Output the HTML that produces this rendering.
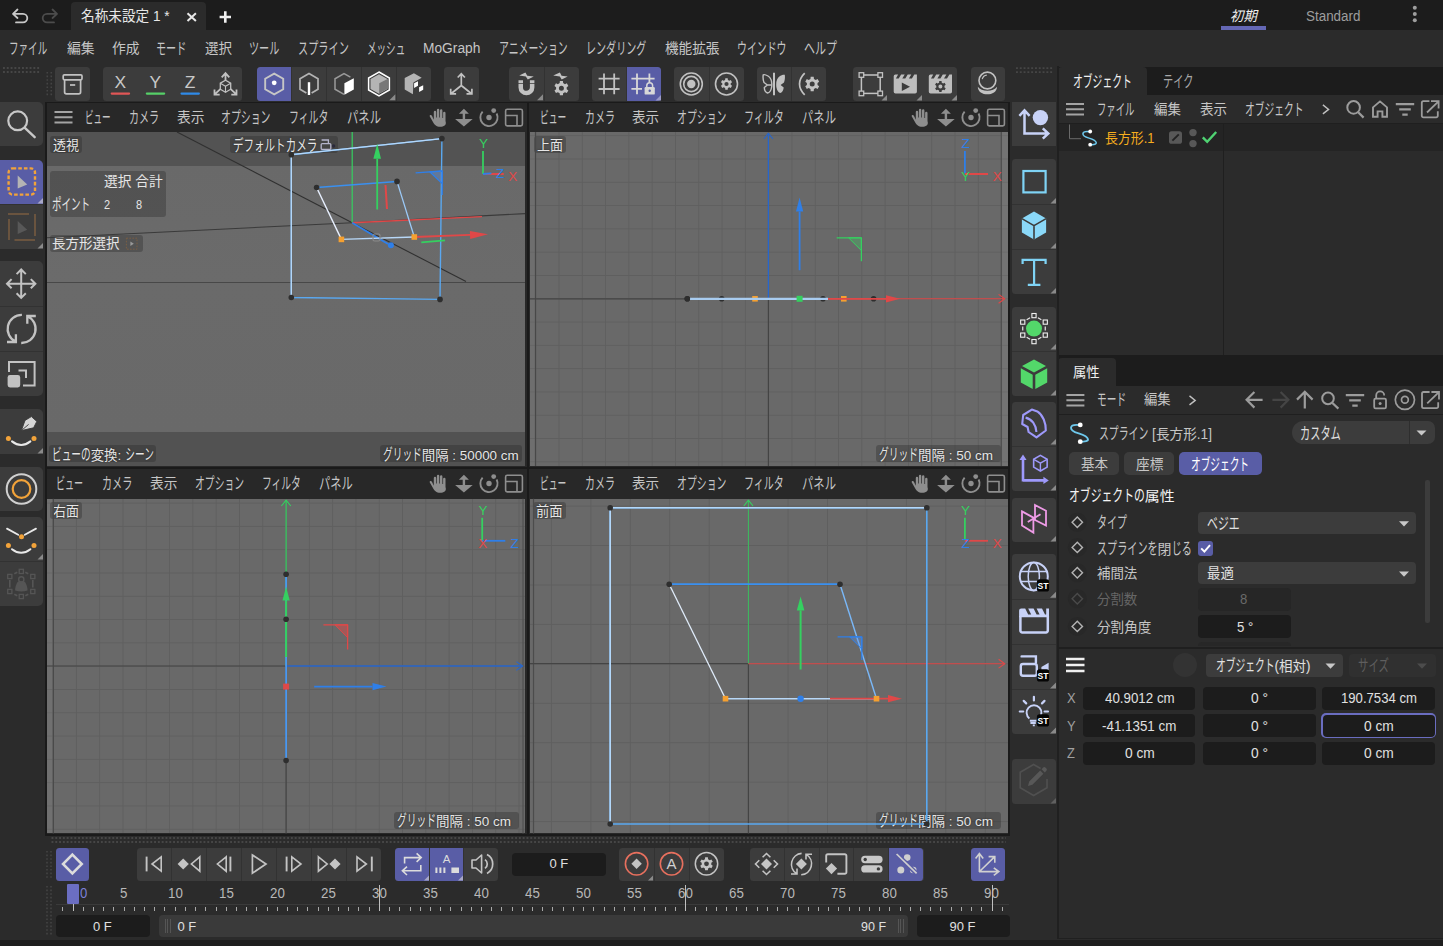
<!DOCTYPE html>
<html lang="ja"><head><meta charset="utf-8"><title>Cinema 4D</title>
<style>
html,body{margin:0;padding:0;}
body{width:1443px;height:946px;background:#2b2b2b;overflow:hidden;position:relative;font-family:"Liberation Sans","Noto Sans CJK JP",sans-serif;}
body div{position:absolute;}
.t{position:absolute;white-space:nowrap;height:20px;line-height:20px;transform-origin:0 50%;}
.k{display:inline-block;font-size:1.15em;line-height:20px;transform:scaleX(.63);transform-origin:0 50%;}
svg{position:absolute;left:0;top:0;}
</style></head><body>
<div style="left:0px;top:0px;width:1443px;height:30px;background:#1c1c1c;"></div>
<div style="left:71px;top:2px;width:135px;height:28px;background:#2b2b2b;border-radius:4px;border-radius:4px 4px 0 0;"></div>
<div style="left:0px;top:940px;width:1443px;height:6px;background:#1e1e1e;"></div>
<span class="t" id="t0" style="left:81px;top:6px;color:#e8e8e8;font-size:14.5px;transform:scaleX(0.9404);">名称未設定 1 *</span>
<span class="t" id="t1" style="left:1230.4px;top:6px;color:#f0f0f0;font-size:14px;font-style:italic;transform:scaleX(0.9571);">初期</span>
<div style="left:1220.5px;top:26px;width:45.5px;height:4px;background:#6467b4;"></div>
<span class="t" id="t2" style="left:1306.4px;top:6px;color:#9e9e9e;font-size:14px;transform:scaleX(0.9579);">Standard</span>
<span class="t" id="t3" style="left:9px;top:38px;color:#c6c6c6;font-size:14px;transform:scaleX(0.9415);"><span class="k" style="margin-right:-23.83px">ファイル</span></span>
<span class="t" id="t4" style="left:66.7px;top:38px;color:#c6c6c6;font-size:14px;transform:scaleX(0.9893);">編集</span>
<span class="t" id="t5" style="left:112px;top:38px;color:#c6c6c6;font-size:14px;transform:scaleX(0.9821);">作成</span>
<span class="t" id="t6" style="left:156.4px;top:38px;color:#c6c6c6;font-size:14px;transform:scaleX(0.9967);"><span class="k" style="margin-right:-17.87px">モード</span></span>
<span class="t" id="t7" style="left:204.7px;top:38px;color:#c6c6c6;font-size:14px;transform:scaleX(0.9643);">選択</span>
<span class="t" id="t8" style="left:249.4px;top:38px;color:#c6c6c6;font-size:14px;transform:scaleX(0.9967);"><span class="k" style="margin-right:-17.87px">ツール</span></span>
<span class="t" id="t9" style="left:297.7px;top:38px;color:#c6c6c6;font-size:14px;transform:scaleX(1.0020);"><span class="k" style="margin-right:-29.79px">スプライン</span></span>
<span class="t" id="t10" style="left:366.8px;top:38px;color:#c6c6c6;font-size:14px;transform:scaleX(0.9415);"><span class="k" style="margin-right:-23.83px">メッシュ</span></span>
<span class="t" id="t11" style="left:423.4px;top:38px;color:#c6c6c6;font-size:14px;transform:scaleX(0.9828);">MoGraph</span>
<span class="t" id="t12" style="left:498.7px;top:38px;color:#c6c6c6;font-size:14px;transform:scaleX(0.9729);"><span class="k" style="margin-right:-41.70px">アニメーション</span></span>
<span class="t" id="t13" style="left:586px;top:38px;color:#c6c6c6;font-size:14px;transform:scaleX(0.9918);"><span class="k" style="margin-right:-35.74px">レンダリング</span></span>
<span class="t" id="t14" style="left:664.5px;top:38px;color:#c6c6c6;font-size:14px;transform:scaleX(0.9732);">機能拡張</span>
<span class="t" id="t15" style="left:736.6px;top:38px;color:#c6c6c6;font-size:14px;transform:scaleX(0.9745);"><span class="k" style="margin-right:-29.79px">ウインドウ</span></span>
<span class="t" id="t16" style="left:804.3px;top:38px;color:#c6c6c6;font-size:14px;transform:scaleX(1.0833);"><span class="k" style="margin-right:-17.87px">ヘルプ</span></span>
<div style="left:55px;top:67px;width:35px;height:34px;background:#3c3c3c;border-radius:3.5px;"></div>
<div style="left:103px;top:67px;width:139px;height:34px;background:#3c3c3c;border-radius:3.5px;"></div>
<div style="left:257px;top:67px;width:174px;height:34px;background:#3c3c3c;border-radius:3.5px;"></div>
<div style="left:257.0px;top:67px;width:34.8px;height:34px;background:#595da6;border-radius:3.5px 0 0 3.5px;"></div>
<div style="left:291.3px;top:67px;width:1.0px;height:34px;background:#323232;"></div>
<div style="left:326.1px;top:67px;width:1.0px;height:34px;background:#323232;"></div>
<div style="left:360.9px;top:67px;width:1.0px;height:34px;background:#323232;"></div>
<div style="left:395.7px;top:67px;width:1.0px;height:34px;background:#323232;"></div>
<div style="left:444px;top:67px;width:35px;height:34px;background:#3c3c3c;border-radius:3.5px;"></div>
<div style="left:509px;top:67px;width:70px;height:34px;background:#3c3c3c;border-radius:3.5px;"></div>
<div style="left:543.5px;top:67px;width:1.0px;height:34px;background:#323232;"></div>
<div style="left:592px;top:67px;width:69px;height:34px;background:#3c3c3c;border-radius:3.5px;"></div>
<div style="left:626.5px;top:67px;width:34.5px;height:34px;background:#595da6;border-radius:0 3.5px 3.5px 0;"></div>
<div style="left:626.0px;top:67px;width:1.0px;height:34px;background:#323232;"></div>
<div style="left:674px;top:67px;width:70px;height:34px;background:#3c3c3c;border-radius:3.5px;"></div>
<div style="left:708.5px;top:67px;width:1.0px;height:34px;background:#323232;"></div>
<div style="left:757px;top:67px;width:69px;height:34px;background:#3c3c3c;border-radius:3.5px;"></div>
<div style="left:791.0px;top:67px;width:1.0px;height:34px;background:#323232;"></div>
<div style="left:853px;top:67px;width:104px;height:34px;background:#3c3c3c;border-radius:3.5px;"></div>
<div style="left:970.5px;top:67px;width:34.5px;height:34px;background:#3c3c3c;border-radius:3.5px;"></div>
<div style="left:0px;top:102px;width:43px;height:44px;background:#3c3c3c;border-radius:0 5px 5px 0;"></div>
<div style="left:0px;top:159.5px;width:43px;height:89.5px;background:#3c3c3c;border-radius:0 5px 5px 0;"></div>
<div style="left:0px;top:159.5px;width:43px;height:44.75px;background:#595da6;border-radius:0 5px 0 0;"></div>
<div style="left:0px;top:203.75px;width:43px;height:1.0px;background:#323232;"></div>
<div style="left:0px;top:261px;width:43px;height:135px;background:#3c3c3c;border-radius:0 5px 5px 0;"></div>
<div style="left:0px;top:305.5px;width:43px;height:1.0px;background:#323232;"></div>
<div style="left:0px;top:350.5px;width:43px;height:1.0px;background:#323232;"></div>
<div style="left:0px;top:409px;width:43px;height:45px;background:#3c3c3c;border-radius:0 5px 5px 0;"></div>
<div style="left:0px;top:467px;width:43px;height:44px;background:#3c3c3c;border-radius:0 5px 5px 0;"></div>
<div style="left:0px;top:517px;width:43px;height:89px;background:#3c3c3c;border-radius:0 5px 5px 0;"></div>
<div style="left:0px;top:561.0px;width:43px;height:1.0px;background:#323232;"></div>
<div style="left:1012px;top:102px;width:44px;height:44px;background:#3c3c3c;"></div>
<div style="left:1012px;top:159px;width:44px;height:135px;background:#3c3c3c;border-radius:3.5px;"></div>
<div style="left:1012px;top:203.5px;width:44px;height:1.0px;background:#323232;"></div>
<div style="left:1012px;top:248.5px;width:44px;height:1.0px;background:#323232;"></div>
<div style="left:1012px;top:307px;width:44px;height:89px;background:#3c3c3c;border-radius:3.5px;"></div>
<div style="left:1012px;top:351.0px;width:44px;height:1.0px;background:#323232;"></div>
<div style="left:1012px;top:402px;width:44px;height:89px;background:#3c3c3c;border-radius:3.5px;"></div>
<div style="left:1012px;top:446.0px;width:44px;height:1.0px;background:#323232;"></div>
<div style="left:1012px;top:497.5px;width:44px;height:44.5px;background:#3c3c3c;border-radius:3.5px;"></div>
<div style="left:1012px;top:554px;width:44px;height:180px;background:#3c3c3c;border-radius:3.5px;"></div>
<div style="left:1012px;top:598.5px;width:44px;height:1.0px;background:#323232;"></div>
<div style="left:1012px;top:643.5px;width:44px;height:1.0px;background:#323232;"></div>
<div style="left:1012px;top:688.5px;width:44px;height:1.0px;background:#323232;"></div>
<div style="left:1012px;top:759px;width:44px;height:45px;background:#3c3c3c;border-radius:3.5px;"></div>
<div style="left:45.4px;top:101.8px;width:964.3px;height:733.8px;background:#1a1a1a;"></div>
<div style="left:46.6px;top:103.4px;width:961.8px;height:730.8px;background:#282828;"></div>
<div style="left:527px;top:102px;width:1.6px;height:733px;background:#1a1a1a;"></div>
<div style="left:46px;top:467.4px;width:963px;height:1.6px;background:#1a1a1a;"></div>
<span class="t" id="t17" style="left:84.7px;top:107px;color:#c6c6c6;font-size:14px;transform:scaleX(0.8433);"><span class="k" style="margin-right:-17.87px">ビュー</span></span>
<span class="t" id="t18" style="left:129px;top:107px;color:#c6c6c6;font-size:14px;transform:scaleX(0.9867);"><span class="k" style="margin-right:-17.87px">カメラ</span></span>
<span class="t" id="t19" style="left:176.6px;top:107px;color:#c6c6c6;font-size:14px;transform:scaleX(0.9786);">表示</span>
<span class="t" id="t20" style="left:221.3px;top:107px;color:#c6c6c6;font-size:14px;transform:scaleX(0.9745);"><span class="k" style="margin-right:-29.79px">オプション</span></span>
<span class="t" id="t21" style="left:289px;top:107px;color:#c6c6c6;font-size:14px;transform:scaleX(0.9750);"><span class="k" style="margin-right:-23.83px">フィルタ</span></span>
<span class="t" id="t22" style="left:346.7px;top:107px;color:#c6c6c6;font-size:14px;transform:scaleX(1.1167);"><span class="k" style="margin-right:-17.87px">パネル</span></span>
<span class="t" id="t23" style="left:539.5px;top:107px;color:#c6c6c6;font-size:14px;transform:scaleX(0.8633);"><span class="k" style="margin-right:-17.87px">ビュー</span></span>
<span class="t" id="t24" style="left:584.5px;top:107px;color:#c6c6c6;font-size:14px;transform:scaleX(0.9833);"><span class="k" style="margin-right:-17.87px">カメラ</span></span>
<span class="t" id="t25" style="left:632px;top:107px;color:#c6c6c6;font-size:14px;transform:scaleX(0.9643);">表示</span>
<span class="t" id="t26" style="left:677px;top:107px;color:#c6c6c6;font-size:14px;transform:scaleX(0.9765);"><span class="k" style="margin-right:-29.79px">オプション</span></span>
<span class="t" id="t27" style="left:744px;top:107px;color:#c6c6c6;font-size:14px;transform:scaleX(0.9850);"><span class="k" style="margin-right:-23.83px">フィルタ</span></span>
<span class="t" id="t28" style="left:801.8px;top:107px;color:#c6c6c6;font-size:14px;transform:scaleX(1.1167);"><span class="k" style="margin-right:-17.87px">パネル</span></span>
<span class="t" id="t29" style="left:56.2px;top:473px;color:#c6c6c6;font-size:14px;transform:scaleX(0.8933);"><span class="k" style="margin-right:-17.87px">ビュー</span></span>
<span class="t" id="t30" style="left:101.6px;top:473px;color:#c6c6c6;font-size:14px;transform:scaleX(0.9933);"><span class="k" style="margin-right:-17.87px">カメラ</span></span>
<span class="t" id="t31" style="left:149.5px;top:473px;color:#c6c6c6;font-size:14px;transform:scaleX(0.9750);">表示</span>
<span class="t" id="t32" style="left:194.5px;top:473px;color:#c6c6c6;font-size:14px;transform:scaleX(0.9686);"><span class="k" style="margin-right:-29.79px">オプション</span></span>
<span class="t" id="t33" style="left:262px;top:473px;color:#c6c6c6;font-size:14px;transform:scaleX(0.9625);"><span class="k" style="margin-right:-23.83px">フィルタ</span></span>
<span class="t" id="t34" style="left:319.4px;top:473px;color:#c6c6c6;font-size:14px;transform:scaleX(1.1133);"><span class="k" style="margin-right:-17.87px">パネル</span></span>
<span class="t" id="t35" style="left:539.5px;top:473px;color:#c6c6c6;font-size:14px;transform:scaleX(0.8633);"><span class="k" style="margin-right:-17.87px">ビュー</span></span>
<span class="t" id="t36" style="left:584.5px;top:473px;color:#c6c6c6;font-size:14px;transform:scaleX(0.9833);"><span class="k" style="margin-right:-17.87px">カメラ</span></span>
<span class="t" id="t37" style="left:632px;top:473px;color:#c6c6c6;font-size:14px;transform:scaleX(0.9643);">表示</span>
<span class="t" id="t38" style="left:677px;top:473px;color:#c6c6c6;font-size:14px;transform:scaleX(0.9765);"><span class="k" style="margin-right:-29.79px">オプション</span></span>
<span class="t" id="t39" style="left:744px;top:473px;color:#c6c6c6;font-size:14px;transform:scaleX(0.9850);"><span class="k" style="margin-right:-23.83px">フィルタ</span></span>
<span class="t" id="t40" style="left:801.8px;top:473px;color:#c6c6c6;font-size:14px;transform:scaleX(1.1167);"><span class="k" style="margin-right:-17.87px">パネル</span></span>
<div style="left:47px;top:132px;width:478.3px;height:334px;background:#6c6c6c;background:linear-gradient(to bottom,#535353 0,#535353 33.7px,#696969 33.7px,#6b6b6b 149.8px,#484848 149.8px,#484848 151.3px,#6a6a6a 151.3px,#696969 300px,#525252 300px,#525252 334px);"></div>
<div style="left:529.7px;top:132px;width:478.3px;height:334px;background:#696969;background-image:linear-gradient(to right,#5f5f5f 1px,transparent 1px),linear-gradient(to bottom,#5f5f5f 1px,transparent 1px);background-size:23.3px 23.3px;background-position:5.20px 3.20px;"></div>
<div style="left:529.7px;top:132px;width:5.3px;height:334px;background:rgba(255,255,255,0.04);"></div>
<div style="left:1002px;top:132px;width:6px;height:334px;background:rgba(255,255,255,0.07);"></div>
<div style="left:47px;top:498.8px;width:478.3px;height:334.7px;background:#696969;background-image:linear-gradient(to right,#5f5f5f 1px,transparent 1px),linear-gradient(to bottom,#5f5f5f 1px,transparent 1px);background-size:23.3px 23.3px;background-position:5.60px 3.60px;"></div>
<div style="left:47px;top:498.8px;width:6px;height:334.7px;background:rgba(255,255,255,0.05);"></div>
<div style="left:529.7px;top:498.8px;width:478.3px;height:334.7px;background:#696969;background-image:linear-gradient(to right,#5f5f5f 1px,transparent 1px),linear-gradient(to bottom,#5f5f5f 1px,transparent 1px);background-size:39.45px 39.45px;background-position:20.95px 6.60px;"></div>
<div style="left:1058px;top:66.5px;width:385px;height:28.5px;background:#1c1c1c;"></div>
<div style="left:1058px;top:66.5px;width:89px;height:28.5px;background:#2b2b2b;border-radius:4px 4px 0 0;"></div>
<div style="left:1058px;top:123px;width:385px;height:1px;background:#1f1f1f;"></div>
<div style="left:1058px;top:124px;width:385px;height:27px;background:#242424;"></div>
<div style="left:1223px;top:124px;width:1px;height:231px;background:#1f1f1f;"></div>
<div style="left:1058px;top:355px;width:385px;height:31px;background:#1c1c1c;"></div>
<div style="left:1058px;top:358px;width:58px;height:28px;background:#2b2b2b;border-radius:4px 4px 0 0;"></div>
<div style="left:1058px;top:414px;width:385px;height:1px;background:#1f1f1f;"></div>
<div style="left:1057px;top:66px;width:1.5px;height:872.5px;background:#202020;"></div>
<div style="left:1057px;top:937.7px;width:386px;height:1.0px;background:#202020;"></div>
<span class="t" id="t41" style="left:1073px;top:71px;color:#f0f0f0;font-size:14px;transform:scaleX(0.9672);"><span class="k" style="margin-right:-35.74px">オブジェクト</span></span>
<span class="t" id="t42" style="left:1162.7px;top:71px;color:#a8a8a8;font-size:14px;transform:scaleX(1.0033);"><span class="k" style="margin-right:-17.87px">テイク</span></span>
<span class="t" id="t43" style="left:1096.7px;top:98.7px;color:#c6c6c6;font-size:14px;transform:scaleX(0.9220);"><span class="k" style="margin-right:-23.83px">ファイル</span></span>
<span class="t" id="t44" style="left:1154px;top:98.7px;color:#c6c6c6;font-size:14px;transform:scaleX(0.9643);">編集</span>
<span class="t" id="t45" style="left:1199.6px;top:98.7px;color:#c6c6c6;font-size:14px;transform:scaleX(0.9643);">表示</span>
<span class="t" id="t46" style="left:1244.7px;top:98.7px;color:#c6c6c6;font-size:14px;transform:scaleX(0.9607);"><span class="k" style="margin-right:-35.74px">オブジェクト</span></span>
<span class="t" id="t47" style="left:1105.3px;top:128px;color:#f7ae1e;font-size:14px;transform:scaleX(0.9204);">長方形.1</span>
<span class="t" id="t48" style="left:1073.3px;top:362px;color:#f0f0f0;font-size:14px;transform:scaleX(0.9536);">属性</span>
<span class="t" id="t49" style="left:1096.7px;top:389.4px;color:#c6c6c6;font-size:14px;transform:scaleX(0.9567);"><span class="k" style="margin-right:-17.87px">モード</span></span>
<span class="t" id="t50" style="left:1144.3px;top:389.4px;color:#c6c6c6;font-size:14px;transform:scaleX(0.9536);">編集</span>
<span class="t" id="t51" style="left:1099.4px;top:422.5px;color:#c6c6c6;font-size:14px;transform:scaleX(0.9733);"><span class="k" style="margin-right:-29.79px">スプライン</span> [長方形.1]</span>
<div style="left:1291.5px;top:421px;width:143.5px;height:23px;background:#3c3c3c;border-radius:11.5px 7px 7px 11.5px;"></div>
<div style="left:1409px;top:421px;width:1px;height:23px;background:#2e2e2e;"></div>
<span class="t" id="t52" style="left:1300.2px;top:422.5px;color:#e0e0e0;font-size:14px;transform:scaleX(1.0049);"><span class="k" style="margin-right:-23.83px">カスタム</span></span>
<div style="left:1069px;top:451.5px;width:50px;height:23.5px;background:#3c3c3c;border-radius:5px;"></div>
<div style="left:1124px;top:451.5px;width:50px;height:23.5px;background:#3c3c3c;border-radius:5px;"></div>
<div style="left:1179px;top:451.5px;width:82.5px;height:23.5px;background:#595da6;border-radius:5px;"></div>
<span class="t" id="t53" style="left:1081px;top:453.5px;color:#c6c6c6;font-size:14px;transform:scaleX(0.9643);">基本</span>
<span class="t" id="t54" style="left:1135.7px;top:453.5px;color:#c6c6c6;font-size:14px;transform:scaleX(0.9750);">座標</span>
<span class="t" id="t55" style="left:1190.8px;top:453.5px;color:#ffffff;font-size:14px;transform:scaleX(0.9541);"><span class="k" style="margin-right:-35.74px">オブジェクト</span></span>
<span class="t" id="t56" style="left:1069px;top:484.8px;color:#f4f4f4;font-size:14px;transform:scaleX(1.0677);"><span class="k" style="margin-right:-41.70px">オブジェクトの</span>属性</span>
<span class="t" id="t57" style="left:1096.7px;top:512.2px;color:#c6c6c6;font-size:14px;transform:scaleX(0.9867);"><span class="k" style="margin-right:-17.87px">タイプ</span></span>
<div style="left:1197.5px;top:511.5px;width:218.5px;height:22.5px;background:#3c3c3c;border-radius:4px;"></div>
<span class="t" id="t58" style="left:1207px;top:512.5px;color:#e0e0e0;font-size:14px;transform:scaleX(1.0733);"><span class="k" style="margin-right:-17.87px">ベジエ</span></span>
<span class="t" id="t59" style="left:1096.7px;top:537.5px;color:#c6c6c6;font-size:14px;transform:scaleX(0.9958);"><span class="k" style="margin-right:-35.74px">スプラインを</span>閉<span class="k" style="margin-right:-11.91px">じる</span></span>
<div style="left:1197.5px;top:540.5px;width:15.5px;height:15.5px;background:#595da6;border-radius:3px;"></div>
<span class="t" id="t60" style="left:1096.7px;top:563px;color:#c6c6c6;font-size:14px;transform:scaleX(0.9595);">補間法</span>
<div style="left:1197.5px;top:561.5px;width:218.5px;height:22.0px;background:#3c3c3c;border-radius:4px;"></div>
<span class="t" id="t61" style="left:1207px;top:562.8px;color:#e0e0e0;font-size:14px;transform:scaleX(0.9571);">最適</span>
<span class="t" id="t62" style="left:1096.7px;top:589px;color:#666;font-size:14px;transform:scaleX(0.9595);">分割数</span>
<div style="left:1197.5px;top:587.5px;width:93.3px;height:23.0px;background:#262626;border-radius:4px;"></div>
<span class="t" id="t63" style="left:1240.25px;top:589px;color:#6a6a6a;font-size:14px;transform:scaleX(0.9375);">8</span>
<span class="t" id="t64" style="left:1096.7px;top:616.5px;color:#c6c6c6;font-size:14px;transform:scaleX(0.9696);">分割角度</span>
<div style="left:1197.5px;top:615px;width:93.3px;height:22.5px;background:#1c1c1c;border-radius:4px;"></div>
<span class="t" id="t65" style="left:1236.5px;top:616.5px;color:#e0e0e0;font-size:14px;transform:scaleX(0.9412);">5 °</span>
<div style="left:1197.5px;top:642px;width:93.3px;height:4px;background:#272727;border-radius:4px 4px 0 0;"></div>
<div style="left:1425px;top:480px;width:4.5px;height:143px;background:#3c3c3c;border-radius:2px;"></div>
<div style="left:1058px;top:647px;width:385px;height:1.5px;background:#1f1f1f;"></div>
<div style="left:1206px;top:653.5px;width:137px;height:23.0px;background:#3c3c3c;border-radius:4px;"></div>
<span class="t" id="t66" style="left:1216px;top:655px;color:#e0e0e0;font-size:14px;transform:scaleX(0.9633);"><span class="k" style="margin-right:-35.74px">オブジェクト</span>(相対)</span>
<div style="left:1349px;top:653.5px;width:86.5px;height:23.0px;background:#303030;border-radius:4px;"></div>
<span class="t" id="t67" style="left:1358.2px;top:655px;color:#5e5e5e;font-size:14px;transform:scaleX(1.0267);"><span class="k" style="margin-right:-17.87px">サイズ</span></span>
<div style="left:1173px;top:653px;width:24px;height:24px;background:#333333;border-radius:12px;"></div>
<span class="t" id="t68" style="left:1066.7px;top:688.25px;color:#a0a0a0;font-size:14px;transform:scaleX(0.9222);">X</span>
<div style="left:1082.5px;top:687px;width:112.5px;height:22.5px;background:#1c1c1c;border-radius:4px;"></div>
<span class="t" id="t69" style="left:1104.5px;top:688.25px;color:#e0e0e0;font-size:14px;transform:scaleX(0.9521);">40.9012 cm</span>
<div style="left:1202.5px;top:687px;width:113.0px;height:22.5px;background:#1c1c1c;border-radius:4px;"></div>
<span class="t" id="t70" style="left:1251.15px;top:688.25px;color:#e0e0e0;font-size:14px;transform:scaleX(0.9824);">0 °</span>
<div style="left:1322px;top:687px;width:113px;height:22.5px;background:#1c1c1c;border-radius:4px;"></div>
<span class="t" id="t71" style="left:1341.0px;top:688.25px;color:#e0e0e0;font-size:14px;transform:scaleX(0.9383);">190.7534 cm</span>
<span class="t" id="t72" style="left:1066.7px;top:715.5px;color:#a0a0a0;font-size:14px;transform:scaleX(0.9222);">Y</span>
<div style="left:1082.5px;top:714px;width:112.5px;height:23px;background:#1c1c1c;border-radius:4px;"></div>
<span class="t" id="t73" style="left:1102.0px;top:715.5px;color:#e0e0e0;font-size:14px;transform:scaleX(0.9551);">-41.1351 cm</span>
<div style="left:1202.5px;top:714px;width:113.0px;height:23px;background:#1c1c1c;border-radius:4px;"></div>
<span class="t" id="t74" style="left:1251.15px;top:715.5px;color:#e0e0e0;font-size:14px;transform:scaleX(0.9824);">0 °</span>
<div style="left:1321px;top:713px;width:115px;height:25px;background:#6a6dc0;border-radius:5px;"></div>
<div style="left:1322.5px;top:714.5px;width:112.0px;height:22.0px;background:#1c1c1c;border-radius:4px;"></div>
<span class="t" id="t75" style="left:1364.25px;top:715.5px;color:#e0e0e0;font-size:14px;transform:scaleX(0.9833);">0 cm</span>
<span class="t" id="t76" style="left:1066.7px;top:743.25px;color:#a0a0a0;font-size:14px;transform:scaleX(0.9222);">Z</span>
<div style="left:1082.5px;top:742px;width:112.5px;height:22.5px;background:#1c1c1c;border-radius:4px;"></div>
<span class="t" id="t77" style="left:1124.5px;top:743.25px;color:#e0e0e0;font-size:14px;transform:scaleX(0.9833);">0 cm</span>
<div style="left:1202.5px;top:742px;width:113.0px;height:22.5px;background:#1c1c1c;border-radius:4px;"></div>
<span class="t" id="t78" style="left:1251.15px;top:743.25px;color:#e0e0e0;font-size:14px;transform:scaleX(0.9824);">0 °</span>
<div style="left:1322px;top:742px;width:113px;height:22.5px;background:#1c1c1c;border-radius:4px;"></div>
<span class="t" id="t79" style="left:1364.25px;top:743.25px;color:#e0e0e0;font-size:14px;transform:scaleX(0.9833);">0 cm</span>
<div style="left:56px;top:847.5px;width:33px;height:33.5px;background:#3c3c3c;border-radius:3.5px;"></div>
<div style="left:56.0px;top:847.5px;width:33.0px;height:33.5px;background:#595da6;border-radius:3.5px;"></div>
<div style="left:137px;top:847.5px;width:244px;height:33.5px;background:#3c3c3c;border-radius:3.5px;"></div>
<div style="left:171.35714285714286px;top:847.5px;width:1.0px;height:33.5px;background:#323232;"></div>
<div style="left:206.21428571428572px;top:847.5px;width:1.0px;height:33.5px;background:#323232;"></div>
<div style="left:241.07142857142856px;top:847.5px;width:1.0px;height:33.5px;background:#323232;"></div>
<div style="left:275.92857142857144px;top:847.5px;width:1.0px;height:33.5px;background:#323232;"></div>
<div style="left:310.7857142857143px;top:847.5px;width:1.0px;height:33.5px;background:#323232;"></div>
<div style="left:345.6428571428571px;top:847.5px;width:1.0px;height:33.5px;background:#323232;"></div>
<div style="left:395px;top:847.5px;width:103px;height:33.5px;background:#3c3c3c;border-radius:3.5px;"></div>
<div style="left:395.0px;top:847.5px;width:34.33px;height:33.5px;background:#595da6;border-radius:3.5px 0 0 3.5px;"></div>
<div style="left:429.3333333333333px;top:847.5px;width:34.33px;height:33.5px;background:#595da6;"></div>
<div style="left:428.8333333333333px;top:847.5px;width:1.0px;height:33.5px;background:#323232;"></div>
<div style="left:463.1666666666667px;top:847.5px;width:1.0px;height:33.5px;background:#323232;"></div>
<div style="left:512px;top:853px;width:94px;height:22.5px;background:#1c1c1c;border-radius:4px;"></div>
<span class="t" id="t80" style="left:549.5px;top:854px;color:#e0e0e0;font-size:13px;transform:scaleX(1.0000);">0 F</span>
<div style="left:619px;top:847.5px;width:105px;height:33.5px;background:#3c3c3c;border-radius:3.5px;"></div>
<div style="left:653.5px;top:847.5px;width:1.0px;height:33.5px;background:#323232;"></div>
<div style="left:688.5px;top:847.5px;width:1.0px;height:33.5px;background:#323232;"></div>
<div style="left:749.5px;top:847.5px;width:174.0px;height:33.5px;background:#3c3c3c;border-radius:3.5px;"></div>
<div style="left:888.7px;top:847.5px;width:34.8px;height:33.5px;background:#595da6;border-radius:0 3.5px 3.5px 0;"></div>
<div style="left:783.8px;top:847.5px;width:1.0px;height:33.5px;background:#323232;"></div>
<div style="left:818.6px;top:847.5px;width:1.0px;height:33.5px;background:#323232;"></div>
<div style="left:853.4px;top:847.5px;width:1.0px;height:33.5px;background:#323232;"></div>
<div style="left:888.2px;top:847.5px;width:1.0px;height:33.5px;background:#323232;"></div>
<div style="left:971px;top:847.5px;width:33.5px;height:33.5px;background:#3c3c3c;border-radius:3.5px;"></div>
<div style="left:971.0px;top:847.5px;width:33.5px;height:33.5px;background:#595da6;border-radius:3.5px;"></div>
<div style="left:56px;top:903.5px;width:953px;height:1.0px;background:#3a3a3a;"></div>
<div style="left:67px;top:884px;width:11.8px;height:19.8px;background:#6b6ec2;border-radius:1px;"></div>
<div style="left:62.38999999999999px;top:907px;width:1.0px;height:4px;background:#a8a8a8;"></div>
<div style="left:72.6px;top:903.5px;width:1.0px;height:7.5px;background:#c0c0c0;"></div>
<div style="left:82.81px;top:907px;width:1.0px;height:4px;background:#a8a8a8;"></div>
<div style="left:93.02px;top:907px;width:1.0px;height:4px;background:#a8a8a8;"></div>
<div style="left:103.22999999999999px;top:907px;width:1.0px;height:4px;background:#a8a8a8;"></div>
<div style="left:113.44px;top:907px;width:1.0px;height:4px;background:#a8a8a8;"></div>
<div style="left:123.65px;top:907px;width:1.0px;height:4px;background:#a8a8a8;"></div>
<div style="left:133.86px;top:907px;width:1.0px;height:4px;background:#a8a8a8;"></div>
<div style="left:144.07px;top:907px;width:1.0px;height:4px;background:#a8a8a8;"></div>
<div style="left:154.28px;top:907px;width:1.0px;height:4px;background:#a8a8a8;"></div>
<div style="left:164.49px;top:907px;width:1.0px;height:4px;background:#a8a8a8;"></div>
<div style="left:174.7px;top:907px;width:1.0px;height:4px;background:#a8a8a8;"></div>
<div style="left:184.91px;top:907px;width:1.0px;height:4px;background:#a8a8a8;"></div>
<div style="left:195.12px;top:907px;width:1.0px;height:4px;background:#a8a8a8;"></div>
<div style="left:205.33px;top:907px;width:1.0px;height:4px;background:#a8a8a8;"></div>
<div style="left:215.54px;top:907px;width:1.0px;height:4px;background:#a8a8a8;"></div>
<div style="left:225.75px;top:907px;width:1.0px;height:4px;background:#a8a8a8;"></div>
<div style="left:235.96px;top:907px;width:1.0px;height:4px;background:#a8a8a8;"></div>
<div style="left:246.17000000000002px;top:907px;width:1.0px;height:4px;background:#a8a8a8;"></div>
<div style="left:256.38px;top:907px;width:1.0px;height:4px;background:#a8a8a8;"></div>
<div style="left:266.59000000000003px;top:907px;width:1.0px;height:4px;background:#a8a8a8;"></div>
<div style="left:276.8px;top:907px;width:1.0px;height:4px;background:#a8a8a8;"></div>
<div style="left:287.01px;top:907px;width:1.0px;height:4px;background:#a8a8a8;"></div>
<div style="left:297.22px;top:907px;width:1.0px;height:4px;background:#a8a8a8;"></div>
<div style="left:307.43px;top:907px;width:1.0px;height:4px;background:#a8a8a8;"></div>
<div style="left:317.64px;top:907px;width:1.0px;height:4px;background:#a8a8a8;"></div>
<div style="left:327.85px;top:907px;width:1.0px;height:4px;background:#a8a8a8;"></div>
<div style="left:338.06000000000006px;top:907px;width:1.0px;height:4px;background:#a8a8a8;"></div>
<div style="left:348.27px;top:907px;width:1.0px;height:4px;background:#a8a8a8;"></div>
<div style="left:358.48px;top:907px;width:1.0px;height:4px;background:#a8a8a8;"></div>
<div style="left:368.69000000000005px;top:907px;width:1.0px;height:4px;background:#a8a8a8;"></div>
<div style="left:378.9px;top:885px;width:1.0px;height:26px;background:#c0c0c0;"></div>
<div style="left:389.11px;top:907px;width:1.0px;height:4px;background:#a8a8a8;"></div>
<div style="left:399.32000000000005px;top:907px;width:1.0px;height:4px;background:#a8a8a8;"></div>
<div style="left:409.53px;top:907px;width:1.0px;height:4px;background:#a8a8a8;"></div>
<div style="left:419.74px;top:907px;width:1.0px;height:4px;background:#a8a8a8;"></div>
<div style="left:429.95000000000005px;top:907px;width:1.0px;height:4px;background:#a8a8a8;"></div>
<div style="left:440.1600000000001px;top:907px;width:1.0px;height:4px;background:#a8a8a8;"></div>
<div style="left:450.37px;top:907px;width:1.0px;height:4px;background:#a8a8a8;"></div>
<div style="left:460.58000000000004px;top:907px;width:1.0px;height:4px;background:#a8a8a8;"></div>
<div style="left:470.7900000000001px;top:907px;width:1.0px;height:4px;background:#a8a8a8;"></div>
<div style="left:481.0px;top:907px;width:1.0px;height:4px;background:#a8a8a8;"></div>
<div style="left:491.21000000000004px;top:907px;width:1.0px;height:4px;background:#a8a8a8;"></div>
<div style="left:501.4200000000001px;top:907px;width:1.0px;height:4px;background:#a8a8a8;"></div>
<div style="left:511.63px;top:907px;width:1.0px;height:4px;background:#a8a8a8;"></div>
<div style="left:521.84px;top:907px;width:1.0px;height:4px;background:#a8a8a8;"></div>
<div style="left:532.0500000000001px;top:907px;width:1.0px;height:4px;background:#a8a8a8;"></div>
<div style="left:542.26px;top:907px;width:1.0px;height:4px;background:#a8a8a8;"></div>
<div style="left:552.47px;top:907px;width:1.0px;height:4px;background:#a8a8a8;"></div>
<div style="left:562.6800000000001px;top:907px;width:1.0px;height:4px;background:#a8a8a8;"></div>
<div style="left:572.89px;top:907px;width:1.0px;height:4px;background:#a8a8a8;"></div>
<div style="left:583.1px;top:907px;width:1.0px;height:4px;background:#a8a8a8;"></div>
<div style="left:593.3100000000001px;top:907px;width:1.0px;height:4px;background:#a8a8a8;"></div>
<div style="left:603.5200000000001px;top:907px;width:1.0px;height:4px;background:#a8a8a8;"></div>
<div style="left:613.73px;top:907px;width:1.0px;height:4px;background:#a8a8a8;"></div>
<div style="left:623.94px;top:907px;width:1.0px;height:4px;background:#a8a8a8;"></div>
<div style="left:634.1500000000001px;top:907px;width:1.0px;height:4px;background:#a8a8a8;"></div>
<div style="left:644.36px;top:907px;width:1.0px;height:4px;background:#a8a8a8;"></div>
<div style="left:654.57px;top:907px;width:1.0px;height:4px;background:#a8a8a8;"></div>
<div style="left:664.7800000000001px;top:907px;width:1.0px;height:4px;background:#a8a8a8;"></div>
<div style="left:674.9900000000001px;top:907px;width:1.0px;height:4px;background:#a8a8a8;"></div>
<div style="left:685.2px;top:885px;width:1.0px;height:26px;background:#c0c0c0;"></div>
<div style="left:695.4100000000001px;top:907px;width:1.0px;height:4px;background:#a8a8a8;"></div>
<div style="left:705.6200000000001px;top:907px;width:1.0px;height:4px;background:#a8a8a8;"></div>
<div style="left:715.83px;top:907px;width:1.0px;height:4px;background:#a8a8a8;"></div>
<div style="left:726.0400000000001px;top:907px;width:1.0px;height:4px;background:#a8a8a8;"></div>
<div style="left:736.2500000000001px;top:907px;width:1.0px;height:4px;background:#a8a8a8;"></div>
<div style="left:746.46px;top:907px;width:1.0px;height:4px;background:#a8a8a8;"></div>
<div style="left:756.6700000000001px;top:907px;width:1.0px;height:4px;background:#a8a8a8;"></div>
<div style="left:766.8800000000001px;top:907px;width:1.0px;height:4px;background:#a8a8a8;"></div>
<div style="left:777.09px;top:907px;width:1.0px;height:4px;background:#a8a8a8;"></div>
<div style="left:787.3000000000001px;top:907px;width:1.0px;height:4px;background:#a8a8a8;"></div>
<div style="left:797.5100000000001px;top:907px;width:1.0px;height:4px;background:#a8a8a8;"></div>
<div style="left:807.7200000000001px;top:907px;width:1.0px;height:4px;background:#a8a8a8;"></div>
<div style="left:817.9300000000001px;top:907px;width:1.0px;height:4px;background:#a8a8a8;"></div>
<div style="left:828.1400000000001px;top:907px;width:1.0px;height:4px;background:#a8a8a8;"></div>
<div style="left:838.3500000000001px;top:907px;width:1.0px;height:4px;background:#a8a8a8;"></div>
<div style="left:848.5600000000001px;top:907px;width:1.0px;height:4px;background:#a8a8a8;"></div>
<div style="left:858.7700000000001px;top:907px;width:1.0px;height:4px;background:#a8a8a8;"></div>
<div style="left:868.9800000000001px;top:907px;width:1.0px;height:4px;background:#a8a8a8;"></div>
<div style="left:879.19px;top:907px;width:1.0px;height:4px;background:#a8a8a8;"></div>
<div style="left:889.4000000000001px;top:907px;width:1.0px;height:4px;background:#a8a8a8;"></div>
<div style="left:899.6100000000001px;top:907px;width:1.0px;height:4px;background:#a8a8a8;"></div>
<div style="left:909.82px;top:907px;width:1.0px;height:4px;background:#a8a8a8;"></div>
<div style="left:920.0300000000001px;top:907px;width:1.0px;height:4px;background:#a8a8a8;"></div>
<div style="left:930.2400000000001px;top:907px;width:1.0px;height:4px;background:#a8a8a8;"></div>
<div style="left:940.45px;top:907px;width:1.0px;height:4px;background:#a8a8a8;"></div>
<div style="left:950.6600000000001px;top:907px;width:1.0px;height:4px;background:#a8a8a8;"></div>
<div style="left:960.8700000000001px;top:907px;width:1.0px;height:4px;background:#a8a8a8;"></div>
<div style="left:971.08px;top:907px;width:1.0px;height:4px;background:#a8a8a8;"></div>
<div style="left:981.2900000000001px;top:907px;width:1.0px;height:4px;background:#a8a8a8;"></div>
<div style="left:991.5000000000001px;top:885px;width:1.0px;height:26px;background:#c0c0c0;"></div>
<div style="left:1001.7100000000002px;top:907px;width:1.0px;height:4px;background:#a8a8a8;"></div>
<span class="t" id="t81" style="left:79.5px;top:882.5px;color:#7d80d8;font-size:14px;transform:scaleX(0.9375);">0</span>
<span class="t" id="t82" style="left:120.35000000000001px;top:882.5px;color:#b8b8b8;font-size:14px;transform:scaleX(0.9500);">5</span>
<span class="t" id="t83" style="left:167.6px;top:882.5px;color:#b8b8b8;font-size:14px;transform:scaleX(0.9500);">10</span>
<span class="t" id="t84" style="left:218.65px;top:882.5px;color:#b8b8b8;font-size:14px;transform:scaleX(0.9500);">15</span>
<span class="t" id="t85" style="left:269.7px;top:882.5px;color:#b8b8b8;font-size:14px;transform:scaleX(0.9500);">20</span>
<span class="t" id="t86" style="left:320.75px;top:882.5px;color:#b8b8b8;font-size:14px;transform:scaleX(0.9500);">25</span>
<span class="t" id="t87" style="left:371.79999999999995px;top:882.5px;color:#b8b8b8;font-size:14px;transform:scaleX(0.9500);">30</span>
<span class="t" id="t88" style="left:422.85px;top:882.5px;color:#b8b8b8;font-size:14px;transform:scaleX(0.9500);">35</span>
<span class="t" id="t89" style="left:473.9px;top:882.5px;color:#b8b8b8;font-size:14px;transform:scaleX(0.9500);">40</span>
<span class="t" id="t90" style="left:524.95px;top:882.5px;color:#b8b8b8;font-size:14px;transform:scaleX(0.9500);">45</span>
<span class="t" id="t91" style="left:576.0px;top:882.5px;color:#b8b8b8;font-size:14px;transform:scaleX(0.9500);">50</span>
<span class="t" id="t92" style="left:627.0500000000001px;top:882.5px;color:#b8b8b8;font-size:14px;transform:scaleX(0.9500);">55</span>
<span class="t" id="t93" style="left:678.1px;top:882.5px;color:#b8b8b8;font-size:14px;transform:scaleX(0.9500);">60</span>
<span class="t" id="t94" style="left:729.1500000000001px;top:882.5px;color:#b8b8b8;font-size:14px;transform:scaleX(0.9500);">65</span>
<span class="t" id="t95" style="left:780.2px;top:882.5px;color:#b8b8b8;font-size:14px;transform:scaleX(0.9500);">70</span>
<span class="t" id="t96" style="left:831.2500000000001px;top:882.5px;color:#b8b8b8;font-size:14px;transform:scaleX(0.9500);">75</span>
<span class="t" id="t97" style="left:882.3000000000001px;top:882.5px;color:#b8b8b8;font-size:14px;transform:scaleX(0.9500);">80</span>
<span class="t" id="t98" style="left:933.35px;top:882.5px;color:#b8b8b8;font-size:14px;transform:scaleX(0.9500);">85</span>
<span class="t" id="t99" style="left:984.4000000000001px;top:882.5px;color:#b8b8b8;font-size:14px;transform:scaleX(0.9500);">90</span>
<div style="left:56px;top:915px;width:93.5px;height:22px;background:#1c1c1c;border-radius:4px;"></div>
<span class="t" id="t100" style="left:93.0px;top:916.8px;color:#e0e0e0;font-size:13px;transform:scaleX(1.0000);">0 F</span>
<div style="left:158.5px;top:915px;width:749.5px;height:22px;background:#3a3a3a;border-radius:4px;"></div>
<div style="left:165px;top:919px;width:1px;height:14px;background:#555;"></div>
<div style="left:167.4px;top:919px;width:1.0px;height:14px;background:#555;"></div>
<div style="left:169.8px;top:919px;width:1.0px;height:14px;background:#555;"></div>
<div style="left:897.5px;top:919px;width:1.0px;height:14px;background:#555;"></div>
<div style="left:900px;top:919px;width:1px;height:14px;background:#555;"></div>
<div style="left:902.5px;top:919px;width:1.0px;height:14px;background:#555;"></div>
<span class="t" id="t101" style="left:177.5px;top:916.6px;color:#e0e0e0;font-size:13px;transform:scaleX(1.0000);">0 F</span>
<span class="t" id="t102" style="left:861px;top:916.6px;color:#e0e0e0;font-size:13px;transform:scaleX(0.9615);">90 F</span>
<div style="left:917px;top:915px;width:92.5px;height:22px;background:#1c1c1c;border-radius:4px;"></div>
<span class="t" id="t103" style="left:949.5px;top:916.8px;color:#e0e0e0;font-size:13px;transform:scaleX(1.0000);">90 F</span>
<div style="left:50px;top:135.9px;width:32px;height:17.0px;background:rgba(40,40,40,0.35);border-radius:3px;"></div>
<span class="t" id="t104" style="left:53px;top:135.70000000000002px;color:#e6e6e6;font-size:13.5px;transform:scaleX(0.9630);text-shadow:0 0 2px rgba(0,0,0,.6);">透視</span>
<div style="left:534px;top:135.9px;width:32px;height:17.0px;background:rgba(40,40,40,0.35);border-radius:3px;"></div>
<span class="t" id="t105" style="left:537px;top:135.70000000000002px;color:#e6e6e6;font-size:13.5px;transform:scaleX(0.9630);text-shadow:0 0 2px rgba(0,0,0,.6);">上面</span>
<div style="left:50px;top:502.3px;width:32px;height:17.0px;background:rgba(40,40,40,0.35);border-radius:3px;"></div>
<span class="t" id="t106" style="left:53px;top:502.1px;color:#e6e6e6;font-size:13.5px;transform:scaleX(0.9630);text-shadow:0 0 2px rgba(0,0,0,.6);">右面</span>
<div style="left:533px;top:502.3px;width:32.5px;height:17.0px;background:rgba(40,40,40,0.35);border-radius:3px;"></div>
<span class="t" id="t107" style="left:536px;top:502.1px;color:#e6e6e6;font-size:13.5px;transform:scaleX(0.9815);text-shadow:0 0 2px rgba(0,0,0,.6);">前面</span>
<div style="left:230px;top:135.9px;width:108px;height:17.0px;background:rgba(40,40,40,0.35);border-radius:3px;"></div>
<span class="t" id="t108" style="left:233px;top:135.6px;color:#e6e6e6;font-size:13.5px;transform:scaleX(1.0769);text-shadow:0 0 2px rgba(0,0,0,.6);"><span class="k" style="margin-right:-45.95px">デフォルトカメラ</span></span>
<div style="left:50px;top:170.5px;width:115.5px;height:46.0px;background:rgba(40,40,40,0.35);border-radius:3px;"></div>
<span class="t" id="t109" style="left:104px;top:171.8px;color:#e6e6e6;font-size:13.5px;transform:scaleX(1.0172);">選択 合計</span>
<span class="t" id="t110" style="left:52px;top:195px;color:#e6e6e6;font-size:13.5px;transform:scaleX(0.9744);"><span class="k" style="margin-right:-22.98px">ポイント</span></span>
<span class="t" id="t111" style="left:104px;top:195px;color:#e6e6e6;font-size:13.5px;transform:scaleX(0.8125);">2</span>
<span class="t" id="t112" style="left:136px;top:195px;color:#e6e6e6;font-size:13.5px;transform:scaleX(0.8125);">8</span>
<div style="left:50px;top:234.5px;width:93px;height:17.0px;background:rgba(40,40,40,0.35);border-radius:3px;"></div>
<span class="t" id="t113" style="left:52px;top:234px;color:#e6e6e6;font-size:13.5px;transform:scaleX(1.0000);">長方形選択</span>
<div style="left:49px;top:445.0px;width:107px;height:17.0px;background:rgba(40,40,40,0.35);border-radius:3px;"></div>
<span class="t" id="t114" style="left:52px;top:444.8px;color:#e6e6e6;font-size:13.5px;transform:scaleX(0.9902);text-shadow:0 0 2px rgba(0,0,0,.6);"><span class="k" style="margin-right:-22.98px">ビューの</span>変換: <span class="k" style="margin-right:-17.23px">シーン</span></span>
<div style="left:380px;top:445.0px;width:142px;height:17.0px;background:rgba(40,40,40,0.35);border-radius:3px;"></div>
<span class="t" id="t115" style="left:383px;top:444.8px;color:#e6e6e6;font-size:13.5px;transform:scaleX(0.9927);text-shadow:0 0 2px rgba(0,0,0,.6);"><span class="k" style="margin-right:-22.98px">グリッド</span>間隔 : 50000 cm</span>
<div style="left:876px;top:445.0px;width:125px;height:17.0px;background:rgba(40,40,40,0.35);border-radius:3px;"></div>
<span class="t" id="t116" style="left:879px;top:444.8px;color:#e6e6e6;font-size:13.5px;transform:scaleX(1.0000);text-shadow:0 0 2px rgba(0,0,0,.6);"><span class="k" style="margin-right:-22.98px">グリッド</span>間隔 : 50 cm</span>
<div style="left:394px;top:811.5px;width:125px;height:17.0px;background:rgba(40,40,40,0.35);border-radius:3px;"></div>
<span class="t" id="t117" style="left:397px;top:811.3px;color:#e6e6e6;font-size:13.5px;transform:scaleX(1.0000);text-shadow:0 0 2px rgba(0,0,0,.6);"><span class="k" style="margin-right:-22.98px">グリッド</span>間隔 : 50 cm</span>
<div style="left:876px;top:811.5px;width:125px;height:17.0px;background:rgba(40,40,40,0.35);border-radius:3px;"></div>
<span class="t" id="t118" style="left:879px;top:811.3px;color:#e6e6e6;font-size:13.5px;transform:scaleX(1.0000);text-shadow:0 0 2px rgba(0,0,0,.6);"><span class="k" style="margin-right:-22.98px">グリッド</span>間隔 : 50 cm</span>
<svg width="1443" height="946" viewBox="0 0 1443 946">
<path d="M17.5,9.5 L13,13.8 L17.5,18 M13.5,13.8 H23 a4.3,4.3 0 0 1 0,8.6 H16" fill="none" stroke="#c8c8c8" stroke-width="1.8" stroke-linecap="round" stroke-linejoin="round"/>
<path d="M52.5,9.5 L57,13.8 L52.5,18 M56.5,13.8 H47 a4.3,4.3 0 0 0 0,8.6 H54" fill="none" stroke="#4c4c4c" stroke-width="1.8" stroke-linecap="round" stroke-linejoin="round"/>
<path d="M187.5,13.2 l8.4,7.8 M195.9,13.2 l-8.4,7.8" stroke="#e8e8e8" stroke-width="2" fill="none"/>
<path d="M225.3,11.3 v11.4 M219.6,17 h11.4" stroke="#f0f0f0" stroke-width="2.6" fill="none"/>
<circle cx="1414.8" cy="7.8" r="2" fill="#9e9e9e"/>
<circle cx="1414.8" cy="14" r="2" fill="#9e9e9e"/>
<circle cx="1414.8" cy="20.3" r="2" fill="#9e9e9e"/>
<path d="M3,68 H41 M3,72 H41" stroke="#464646" stroke-width="1.9" stroke-dasharray="1.9 1.9" fill="none"/>
<path d="M47.3,72 V97 M51.3,72 V97" stroke="#444" stroke-width="1.6" stroke-dasharray="1.6 2" fill="none"/>
<path d="M1016,68.1 H1052.5 M1016,72.1 H1052.5" stroke="#464646" stroke-width="1.9" stroke-dasharray="1.9 1.9" fill="none"/>
<path d="M47,851 V878 M51,851 V878" stroke="#444" stroke-width="1.6" stroke-dasharray="1.6 2" fill="none"/>
<path d="M47,886 V936 M51,886 V936" stroke="#444" stroke-width="1.6" stroke-dasharray="1.6 2" fill="none"/>
<path d="M51.5,838 H1006 M51.5,842 H1006" stroke="#464646" stroke-width="1.9" stroke-dasharray="1.9 1.9" fill="none"/>
<rect x="63.2" y="74.8" width="18.8" height="5" rx="1.2" fill="none" stroke="#c2c2c2" stroke-width="1.7"/><path d="M64.6,80 V92 a1.8,1.8 0 0 0 1.8,1.8 H78.8 a1.8,1.8 0 0 0 1.8,-1.8 V80" fill="none" stroke="#c2c2c2" stroke-width="1.7"/><path d="M70,85 h5.2" stroke="#c2c2c2" stroke-width="1.7"/>
<text x="120.3" y="87.9" font-size="17.4" text-anchor="middle" fill="#c8c8c8" font-family="Liberation Sans, sans-serif">X</text>
<path d="M111.7,93.6 h17.4" stroke="#e05656" stroke-width="2.1" stroke-linecap="round"/>
<text x="155.4" y="87.9" font-size="17.4" text-anchor="middle" fill="#c8c8c8" font-family="Liberation Sans, sans-serif">Y</text>
<path d="M146.8,93.6 h17.4" stroke="#56d068" stroke-width="2.1" stroke-linecap="round"/>
<text x="190.1" y="87.9" font-size="17.4" text-anchor="middle" fill="#c8c8c8" font-family="Liberation Sans, sans-serif">Z</text>
<path d="M181.5,93.6 h17.4" stroke="#2f8ae8" stroke-width="2.1" stroke-linecap="round"/>
<g transform="translate(225.5,86.2)" ><polygon points="0.00,-6.00 5.20,-3.00 5.20,3.00 0.00,6.00 -5.20,3.00 -5.20,-3.00" fill="none" stroke="#c2c2c2" stroke-width="1.3"/><path d="M0,0 V6 M0,0 L-5.2,-3 M0,0 L5.2,-3" stroke="#c2c2c2" stroke-width="1.1" fill="none"/><path d="M0,-6 V-12.6 M-3.8,-8.8 L0,-13 L3.8,-8.8" stroke="#c2c2c2" stroke-width="1.8" fill="none"/><path d="M-5.2,3 L-10.6,8 M-11,3.2 V8.4 H-5.8" stroke="#c2c2c2" stroke-width="1.8" fill="none"/><path d="M5.2,3 L10.6,8 M11,3.2 V8.4 H5.8" stroke="#c2c2c2" stroke-width="1.8" fill="none"/></g>
<g transform="translate(274.2,84)" ><polygon points="0.00,-10.40 9.01,-5.20 9.01,5.20 0.00,10.40 -9.01,5.20 -9.01,-5.20" fill="none" stroke="#c6c6c6" stroke-width="1.9"/><circle cx="0" cy="-1.2" r="2.4" fill="#fff"/></g>
<g transform="translate(309,84)" ><path d="M-2.6,9 L-9,5.2 V-5.2 L0,-10.4 L9,-5.2 V5.2 L2.6,9" fill="none" stroke="#b4b4b4" stroke-width="1.7"/><path d="M0,-1.8 V11" stroke="#fff" stroke-width="2.4"/></g>
<g transform="translate(344,84)" ><path d="M0,10.4 L-9,5.2 V-5.2 L0,-10.4 L6.4,-6.8" fill="none" stroke="#9a9a9a" stroke-width="1.5"/><path d="M0.4,-0.8 L9.8,-5.8 V5.4 L0.4,10.8 Z" fill="#fff"/></g>
<g transform="translate(379,84)" ><polygon points="0.00,-12.00 10.39,-6.00 10.39,6.00 0.00,12.00 -10.39,6.00 -10.39,-6.00" fill="none" stroke="#fff" stroke-width="1.5"/><polygon points="0.00,-9.80 8.49,-4.90 8.49,4.90 0.00,9.80 -8.49,4.90 -8.49,-4.90" fill="#b4b4b4"/><path d="M0.2,-0.8 L8.5,-5 V4.8 L0.2,9.6 Z" fill="#787878"/></g>
<path d="M395.3,100.3 l0,-6 l-6,6 z" fill="#8a8a8a"/>
<path d="M413.9,73.2 L421.7,77.7 L413.4,82.6 L412.9,94.3 L404.7,89.5 V78 Z" fill="#b4b4b4"/><path d="M414.1,83.3 L418,81.2 V85.7 L414.1,88 Z M419.1,87.3 L423.2,85.2 V89.7 L419.1,92 Z" fill="#fff"/>
<g transform="translate(461.3,85.5)" ><path d="M0,0 V-11.5 M-3.6,-8 L0,-11.8 L3.6,-8 M0,0 L-10,8 M-10.6,3.2 V8.4 H-5.2 M0,0 L10,8 M10.6,3.2 V8.4 H5.2" stroke="#c2c2c2" stroke-width="1.7" fill="none" stroke-linejoin="miter"/></g>
<path d="M520.75,83.7 V87.4 a5.7,5.7 0 0 0 11.4,0 V83.7" fill="none" stroke="#c2c2c2" stroke-width="4.5"/><path d="M518.5,80.2 h4.5 v2.8 h-4.5z M529.9,80.2 h4.5 v2.8 h-4.5z" fill="#c2c2c2"/><path d="M519.2,75.6 L525.4,72.5 L527.3,75.7 L533.8,76.6 L527.8,79.5 L525.8,76.5 Z" fill="#c2c2c2"/>
<path d="M543,100.3 l0,-6 l-6,6 z" fill="#8a8a8a"/>
<path d="M559.66,83.08 L559.88,81.06 L562.92,81.06 L563.14,83.08 L564.96,84.14 L566.82,83.32 L568.34,85.94 L566.70,87.15 L566.70,89.25 L568.34,90.46 L566.82,93.08 L564.96,92.26 L563.14,93.32 L562.92,95.34 L559.88,95.34 L559.66,93.32 L557.84,92.26 L555.98,93.08 L554.46,90.46 L556.10,89.25 L556.10,87.15 L554.46,85.94 L555.98,83.32 L557.84,84.14 Z M563.90,88.2 a2.50,2.50 0 1,0 -5.00,0 a2.50,2.50 0 1,0 5.00,0 Z" fill="#c2c2c2" fill-rule="evenodd"/>
<path d="M553.2,75.6 L559.9,72.5 L561.6,75.7 L567.7,76.6 L561.7,79.5 L559.8,76.5 Z" fill="#c2c2c2"/>
<path d="M604,73.5 V94.2 M614.2,73.5 V94.2 M598.6,78.6 H619.6 M598.6,89 H619.6" stroke="#c2c2c2" stroke-width="1.8" fill="none"/>
<path d="M637,73.5 V94.2 M649.4,73.5 V82.5 M631.4,78.6 H654.6 M631.4,88.8 H642" stroke="#d8d8d8" stroke-width="1.8" fill="none"/>
<rect x="644.6" y="87" width="10.2" height="7.6" rx="1.2" fill="#d8d8d8"/><path d="M646.8,87.2 v-1.6 a2.9,2.9 0 0 1 5.8,0 v1.6" stroke="#d8d8d8" stroke-width="1.5" fill="none"/><circle cx="649.7" cy="90.8" r="1.2" fill="#595da6"/>
<path d="M661,100.5 l0,-5.5 l-5.5,5.5 z" fill="#9a9ac8"/>
<g transform="translate(691.3,84)" ><circle r="11" fill="none" stroke="#c2c2c2" stroke-width="1.6"/><circle r="7.6" fill="none" stroke="#c2c2c2" stroke-width="1.6"/><circle r="4.2" fill="#c2c2c2"/></g>
<g transform="translate(726.5,84)" ><circle r="11" fill="none" stroke="#c2c2c2" stroke-width="1.6"/></g>
<path d="M725.12,79.94 L725.29,78.33 L727.71,78.33 L727.88,79.94 L729.33,80.77 L730.81,80.12 L732.02,82.21 L730.71,83.16 L730.71,84.84 L732.02,85.79 L730.81,87.88 L729.33,87.23 L727.88,88.06 L727.71,89.67 L725.29,89.67 L725.12,88.06 L723.67,87.23 L722.19,87.88 L720.98,85.79 L722.29,84.84 L722.29,83.16 L720.98,82.21 L722.19,80.12 L723.67,80.77 Z M728.60,84 a2.10,2.10 0 1,0 -4.20,0 a2.10,2.10 0 1,0 4.20,0 Z" fill="#c2c2c2" fill-rule="evenodd"/>
<g transform="translate(774,84)" ><path d="M0,-11.3 V11.2" stroke="#c2c2c2" stroke-width="2"/><path d="M2.2,1 C2,-3 3.5,-6.5 6,-8 C8,-9.2 10,-9.6 10.8,-9.2 C11.2,-6 10.8,-3.5 10,-1.5 L6.6,1 L9.7,3.5 C9.6,6 8.2,8.4 6.5,9 C4.5,8.6 3,6.5 2.6,4 C2.3,3 2.2,2 2.2,1 Z" fill="#c2c2c2"/><path d="M-2.2,1 C-2,-3 -3.5,-6.5 -6,-8 C-8,-9.2 -10,-9.6 -10.8,-9.2 C-11.2,-6 -10.8,-3.5 -10,-1.5 L-6.6,1 L-9.7,3.5 C-9.6,6 -8.2,8.4 -6.5,9 C-4.5,8.6 -3,6.5 -2.6,4 C-2.3,3 -2.2,2 -2.2,1 Z M-2.6,1 L-6.6,1" fill="none" stroke="#c2c2c2" stroke-width="1.4" stroke-linejoin="round"/></g>
<path d="M804.7,73.2 C797.8,80 797.8,88 804.7,94.8" stroke="#c2c2c2" stroke-width="1.7" fill="none"/>
<path d="M810.46,78.88 L810.68,76.86 L813.72,76.86 L813.94,78.88 L815.76,79.94 L817.62,79.12 L819.14,81.74 L817.50,82.95 L817.50,85.05 L819.14,86.26 L817.62,88.88 L815.76,88.06 L813.94,89.12 L813.72,91.14 L810.68,91.14 L810.46,89.12 L808.64,88.06 L806.78,88.88 L805.26,86.26 L806.90,85.05 L806.90,82.95 L805.26,81.74 L806.78,79.12 L808.64,79.94 Z M814.70,84 a2.50,2.50 0 1,0 -5.00,0 a2.50,2.50 0 1,0 5.00,0 Z" fill="#c2c2c2" fill-rule="evenodd"/>
<g transform="translate(870.8,84.2)" ><rect x="-9.4" y="-9.2" width="18.8" height="18.4" fill="none" stroke="#c2c2c2" stroke-width="1.5"/><rect x="-11.7" y="-11.5" width="4.6" height="4.6" fill="#3c3c3c" stroke="#c2c2c2" stroke-width="1.3"/><rect x="-11.7" y="6.8999999999999995" width="4.6" height="4.6" fill="#3c3c3c" stroke="#c2c2c2" stroke-width="1.3"/><rect x="7.1000000000000005" y="-11.5" width="4.6" height="4.6" fill="#3c3c3c" stroke="#c2c2c2" stroke-width="1.3"/><rect x="7.1000000000000005" y="6.8999999999999995" width="4.6" height="4.6" fill="#3c3c3c" stroke="#c2c2c2" stroke-width="1.3"/></g>
<path d="M887,100.5 l0,-5.5 l-5.5,5.5 z" fill="#8a8a8a"/>
<g transform="translate(905.3,84)" ><path d="M-11.6,-6.2 L-11.6,7.8 a1.8,1.8 0 0 0 1.8,1.8 H9.8 a1.8,1.8 0 0 0 1.8,-1.8 V-9.6 H9 L6.6,-5.4 H3.6 L6,-9.6 H2.4 L0,-5.4 H-3 L-0.6,-9.6 H-4.2 L-6.6,-5.4 H-9.4 L-7.2,-9.6 H-9.8 a1.8,1.8 0 0 0 -1.8,1.8 Z" fill="#bdbdbd"/></g>
<path d="M901.8,82.4 V91 L910,86.7 Z" fill="#3c3c3c"/>
<path d="M922,100.5 l0,-5.5 l-5.5,5.5 z" fill="#8a8a8a"/>
<g transform="translate(940.4,84)" ><path d="M-11.6,-6.2 L-11.6,7.8 a1.8,1.8 0 0 0 1.8,1.8 H9.8 a1.8,1.8 0 0 0 1.8,-1.8 V-9.6 H9 L6.6,-5.4 H3.6 L6,-9.6 H2.4 L0,-5.4 H-3 L-0.6,-9.6 H-4.2 L-6.6,-5.4 H-9.4 L-7.2,-9.6 H-9.8 a1.8,1.8 0 0 0 -1.8,1.8 Z" fill="#bdbdbd"/></g>
<path d="M939.07,82.68 L939.24,81.12 L941.56,81.12 L941.73,82.68 L943.13,83.48 L944.56,82.85 L945.73,84.87 L944.46,85.79 L944.46,87.41 L945.73,88.33 L944.56,90.35 L943.13,89.72 L941.73,90.52 L941.56,92.08 L939.24,92.08 L939.07,90.52 L937.67,89.72 L936.24,90.35 L935.07,88.33 L936.34,87.41 L936.34,85.79 L935.07,84.87 L936.24,82.85 L937.67,83.48 Z M942.40,86.6 a2.00,2.00 0 1,0 -4.00,0 a2.00,2.00 0 1,0 4.00,0 Z" fill="#3c3c3c" fill-rule="evenodd"/>
<path d="M957,100.5 l0,-5.5 l-5.5,5.5 z" fill="#8a8a8a"/>
<g transform="translate(987.4,80.5)" ><circle r="8.4" fill="none" stroke="#c2c2c2" stroke-width="1.6"/><path d="M-5.2,-1.4 A5.4,5.4 0 0 1 -0.6,-5.4" stroke="#c2c2c2" stroke-width="1.2" fill="none"/><path d="M-9.6,6.2 C-9.6,16.4 9.6,16.4 9.6,6.2 C6,11.6 -6,11.6 -9.6,6.2 Z" fill="#c2c2c2"/></g>
<g transform="translate(17.7,120.8)" ><circle r="9.4" fill="none" stroke="#c8c8c8" stroke-width="2.2"/><path d="M6.9,6.9 L17,16.4" stroke="#c8c8c8" stroke-width="2.4" stroke-linecap="round"/></g>
<rect x="8.6" y="168.4" width="26.4" height="26.2" rx="4" fill="none" stroke="#f2a33a" stroke-width="2.4" stroke-dasharray="3.6 2.05"/><path d="M17.7,175.6 V188.6 L27.2,184.4 Z" fill="#b4b4b4"/>
<path d="M43,203.5 l0,-5.5 l-5.5,5.5 z" fill="#a8a8c8"/>
<path d="M8,214 H29 M35,214 V236 M9,219 V240 M14.5,240 H35" stroke="#6a543f" stroke-width="2" fill="none"/><path d="M17.7,221 V234 L27.2,229.8 Z" fill="#585858"/>
<path d="M43,248.5 l0,-5.5 l-5.5,5.5 z" fill="#8a8a8a"/>
<g transform="translate(21.2,283.7)" ><path d="M-14,0 H14 M0,-14 V14 M-4.6,-9.6 L0,-14.2 L4.6,-9.6 M-4.6,9.6 L0,14.2 L4.6,9.6 M-9.6,-4.6 L-14.2,0 L-9.6,4.6 M9.6,-4.6 L14.2,0 L9.6,4.6" stroke="#c2c2c2" stroke-width="2" fill="none"/></g>
<path d="M21.9,314.8 A14.1,14.1 0 0 0 15.6,341.6 M15.9,334.2 V342 H7 M21.2,343 A14.1,14.1 0 0 0 27.6,316.2 M27.3,323.8 V316 H35.8" stroke="#c2c2c2" stroke-width="2.3" fill="none"/>
<path d="M9,372 V362 H34.6 V385.4 H23" stroke="#c2c2c2" stroke-width="2" fill="none"/><rect x="7.6" y="375" width="12.6" height="12.4" rx="2.4" fill="#c2c2c2"/><path d="M18.5,370.5 H26 V378" stroke="#c2c2c2" stroke-width="2" fill="none"/>
<path d="M12,441.4 Q21.2,448.6 30.4,441.4" stroke="#e8e8e8" stroke-width="2" fill="none" stroke-linecap="round"/><circle cx="8.4" cy="438.6" r="2.5" fill="#f2a33a"/><circle cx="34" cy="438.6" r="2.5" fill="#f2a33a"/><path d="M21.4,430.6 L25,420.4 L31.4,416.6 L36.8,421.4 L33.6,427.8 Z M21.4,430.6 L28.6,424.4" fill="#d6d6d6" stroke="#3a3a3a" stroke-width="0.9"/>
<path d="M43,453.5 l0,-5.5 l-5.5,5.5 z" fill="#8a8a8a"/>
<g transform="translate(21.5,489)" ><circle r="14.8" fill="none" stroke="#d0d0d0" stroke-width="2"/><circle r="8.8" fill="none" stroke="#f2a33a" stroke-width="2.2"/></g>
<path d="M7,528.6 L18.2,534.8 M36,528.6 L24.8,534.8" stroke="#e8e8e8" stroke-width="1.8" fill="none" stroke-linecap="round"/><circle cx="21.5" cy="536.8" r="2.5" fill="#f2a33a"/><path d="M12,549.2 Q21.2,556.4 30.4,549.2" stroke="#e8e8e8" stroke-width="2" fill="none" stroke-linecap="round"/><circle cx="8.4" cy="545.6" r="2.5" fill="#f2a33a"/><circle cx="34" cy="545.6" r="2.5" fill="#f2a33a"/>
<path d="M43,559.5 l0,-5.5 l-5.5,5.5 z" fill="#8a8a8a"/>
<g transform="translate(21.3,584)" ><path d="M-7,-10.2 L-4,-11.8 M4,-11.8 L7,-10.2 M-7,10.2 L-4,11.8 M4,11.8 L7,10.2 M-11.5,-4 V3.6 M11.5,-4 V3.6" stroke="#555" stroke-width="1.6" fill="none"/><rect x="-2.1" y="-14.7" width="4.2" height="4.2" fill="none" stroke="#555" stroke-width="1.3"/><rect x="-2.1" y="10.4" width="4.2" height="4.2" fill="none" stroke="#555" stroke-width="1.3"/><rect x="-13.6" y="-9.6" width="4.2" height="4.2" fill="none" stroke="#555" stroke-width="1.3"/><rect x="9.4" y="-9.6" width="4.2" height="4.2" fill="none" stroke="#555" stroke-width="1.3"/><rect x="-13.6" y="5.4" width="4.2" height="4.2" fill="none" stroke="#555" stroke-width="1.3"/><rect x="9.4" y="5.4" width="4.2" height="4.2" fill="none" stroke="#555" stroke-width="1.3"/><path d="M-6.2,6.6 C-6.4,3 -4.6,-1.6 -3,-2.6 H3 C4.6,-1.6 6.4,3 6.2,6.6 Q0,8.6 -6.2,6.6 Z" fill="#555"/><circle cx="0" cy="-4.6" r="2.6" fill="none" stroke="#555" stroke-width="1.4"/></g>
<g transform="translate(429.6,117.5)" ><path d="M4.2,2.2 V-5.6 a1.2,1.2 0 0 1 2.4,0 V0 h0.7 V-7.6 a1.2,1.2 0 0 1 2.4,0 V0 h0.7 V-7 a1.2,1.2 0 0 1 2.4,0 V0.4 h0.7 V-4.6 a1.2,1.2 0 0 1 2.4,0 V3.6 C17.4,7.8 14,9.3 10.6,9.3 C6.8,9.3 4.6,7 2.8,3.4 L0.2,-1 C-0.5,-2.4 1.2,-3.2 2.2,-2 Z" fill="#8e8e8e"/></g>
<path d="M463.90000000000003,108.7 l5,5 h-3.8 v5.3 h7.6 l-8.8,7.4 l-8.8,-7.4 h7.6 v-5.3 h-3.8 z" fill="#8e8e8e"/>
<path d="M482.6,111.7 A8.6,8.6 0 1 0 496.6,113.5" fill="none" stroke="#8e8e8e" stroke-width="1.9"/><circle cx="489.0" cy="117.5" r="2.7" fill="#8e8e8e"/><circle cx="493.7" cy="110.6" r="2.4" fill="#8e8e8e"/>
<rect x="505.6" y="109.3" width="16.8" height="16.6" rx="1.6" fill="none" stroke="#8e8e8e" stroke-width="1.6"/><path d="M505.6,115.5 H517.0 V125.9" fill="none" stroke="#8e8e8e" stroke-width="1.6"/>
<g transform="translate(911.6,117.5)" ><path d="M4.2,2.2 V-5.6 a1.2,1.2 0 0 1 2.4,0 V0 h0.7 V-7.6 a1.2,1.2 0 0 1 2.4,0 V0 h0.7 V-7 a1.2,1.2 0 0 1 2.4,0 V0.4 h0.7 V-4.6 a1.2,1.2 0 0 1 2.4,0 V3.6 C17.4,7.8 14,9.3 10.6,9.3 C6.8,9.3 4.6,7 2.8,3.4 L0.2,-1 C-0.5,-2.4 1.2,-3.2 2.2,-2 Z" fill="#8e8e8e"/></g>
<path d="M945.9,108.7 l5,5 h-3.8 v5.3 h7.6 l-8.8,7.4 l-8.8,-7.4 h7.6 v-5.3 h-3.8 z" fill="#8e8e8e"/>
<path d="M964.6,111.7 A8.6,8.6 0 1 0 978.6,113.5" fill="none" stroke="#8e8e8e" stroke-width="1.9"/><circle cx="971.0" cy="117.5" r="2.7" fill="#8e8e8e"/><circle cx="975.7" cy="110.6" r="2.4" fill="#8e8e8e"/>
<rect x="987.6" y="109.3" width="16.8" height="16.6" rx="1.6" fill="none" stroke="#8e8e8e" stroke-width="1.6"/><path d="M987.6,115.5 H999.0000000000001 V125.9" fill="none" stroke="#8e8e8e" stroke-width="1.6"/>
<g transform="translate(429.6,483.5)" ><path d="M4.2,2.2 V-5.6 a1.2,1.2 0 0 1 2.4,0 V0 h0.7 V-7.6 a1.2,1.2 0 0 1 2.4,0 V0 h0.7 V-7 a1.2,1.2 0 0 1 2.4,0 V0.4 h0.7 V-4.6 a1.2,1.2 0 0 1 2.4,0 V3.6 C17.4,7.8 14,9.3 10.6,9.3 C6.8,9.3 4.6,7 2.8,3.4 L0.2,-1 C-0.5,-2.4 1.2,-3.2 2.2,-2 Z" fill="#8e8e8e"/></g>
<path d="M463.90000000000003,474.7 l5,5 h-3.8 v5.3 h7.6 l-8.8,7.4 l-8.8,-7.4 h7.6 v-5.3 h-3.8 z" fill="#8e8e8e"/>
<path d="M482.6,477.7 A8.6,8.6 0 1 0 496.6,479.5" fill="none" stroke="#8e8e8e" stroke-width="1.9"/><circle cx="489.0" cy="483.5" r="2.7" fill="#8e8e8e"/><circle cx="493.7" cy="476.6" r="2.4" fill="#8e8e8e"/>
<rect x="505.6" y="475.3" width="16.8" height="16.6" rx="1.6" fill="none" stroke="#8e8e8e" stroke-width="1.6"/><path d="M505.6,481.5 H517.0 V491.9" fill="none" stroke="#8e8e8e" stroke-width="1.6"/>
<g transform="translate(911.6,483.5)" ><path d="M4.2,2.2 V-5.6 a1.2,1.2 0 0 1 2.4,0 V0 h0.7 V-7.6 a1.2,1.2 0 0 1 2.4,0 V0 h0.7 V-7 a1.2,1.2 0 0 1 2.4,0 V0.4 h0.7 V-4.6 a1.2,1.2 0 0 1 2.4,0 V3.6 C17.4,7.8 14,9.3 10.6,9.3 C6.8,9.3 4.6,7 2.8,3.4 L0.2,-1 C-0.5,-2.4 1.2,-3.2 2.2,-2 Z" fill="#8e8e8e"/></g>
<path d="M945.9,474.7 l5,5 h-3.8 v5.3 h7.6 l-8.8,7.4 l-8.8,-7.4 h7.6 v-5.3 h-3.8 z" fill="#8e8e8e"/>
<path d="M964.6,477.7 A8.6,8.6 0 1 0 978.6,479.5" fill="none" stroke="#8e8e8e" stroke-width="1.9"/><circle cx="971.0" cy="483.5" r="2.7" fill="#8e8e8e"/><circle cx="975.7" cy="476.6" r="2.4" fill="#8e8e8e"/>
<rect x="987.6" y="475.3" width="16.8" height="16.6" rx="1.6" fill="none" stroke="#8e8e8e" stroke-width="1.6"/><path d="M987.6,481.5 H999.0000000000001 V491.9" fill="none" stroke="#8e8e8e" stroke-width="1.6"/>
<path d="M54.5,112.0 h18 M54.5,117.2 h18 M54.5,122.4 h18" stroke="#a4a4a4" stroke-width="2"/>
<path d="M1066,104.1 h18 M1066,109.3 h18 M1066,114.5 h18" stroke="#a4a4a4" stroke-width="2"/>
<path d="M1066.4,395.0 h18 M1066.4,400.2 h18 M1066.4,405.4 h18" stroke="#a4a4a4" stroke-width="2"/>
<path d="M1066,659 h18.5 M1066,665 h18.5 M1066,671 h18.5" stroke="#f0f0f0" stroke-width="2.4"/>
<path d="M1024.5,134.8 V111 M1019.4,115.8 L1024.5,110.4 L1029.6,115.8 M1023.2,133.5 H1047.6 M1042.8,128.3 L1048.3,133.5 L1042.8,138.7" stroke="#c8d2f7" stroke-width="2.5" fill="none"/><circle cx="1040.4" cy="117.6" r="7.7" fill="#c8d2f7"/>
<rect x="1023.4" y="171" width="22.2" height="21.4" fill="none" stroke="#7fd3f5" stroke-width="2.2"/>
<path d="M1056,203.5 l0,-5.5 l-5.5,5.5 z" fill="#8a8a8a"/>
<g transform="translate(1034,225.6)" ><polygon points="0.00,-14.00 12.12,-7.00 12.12,7.00 0.00,14.00 -12.12,7.00 -12.12,-7.00" fill="#8ad8f8"/><path d="M0,0 V14 M0,0 L-12.1,-7 M0,0 L12.1,-7" stroke="#3c3c3c" stroke-width="1.6"/></g>
<path d="M1056,248.5 l0,-5.5 l-5.5,5.5 z" fill="#8a8a8a"/>
<path d="M1022.6,264 V259.8 H1045.6 V264 M1034.1,259.8 V284.8 M1027.8,284.8 H1040.4" stroke="#7fd3f5" stroke-width="2.2" fill="none"/>
<path d="M1056,293.5 l0,-5.5 l-5.5,5.5 z" fill="#8a8a8a"/>
<g transform="translate(1034,328.6)" ><polygon points="0.00,-13.00 11.26,-6.50 11.26,6.50 0.00,13.00 -11.26,6.50 -11.26,-6.50" fill="none" stroke="#e8e8e8" stroke-width="1.2" stroke-dasharray="4 2.5" stroke-dashoffset="-4.5"/><circle r="8" fill="#53d86a"/><rect x="-2.10" y="-15.10" width="4.2" height="4.2" fill="#3c3c3c" stroke="#f0f0f0" stroke-width="1.1"/><rect x="9.16" y="-8.60" width="4.2" height="4.2" fill="#3c3c3c" stroke="#f0f0f0" stroke-width="1.1"/><rect x="9.16" y="4.40" width="4.2" height="4.2" fill="#3c3c3c" stroke="#f0f0f0" stroke-width="1.1"/><rect x="-2.10" y="10.90" width="4.2" height="4.2" fill="#3c3c3c" stroke="#f0f0f0" stroke-width="1.1"/><rect x="-13.36" y="4.40" width="4.2" height="4.2" fill="#3c3c3c" stroke="#f0f0f0" stroke-width="1.1"/><rect x="-13.36" y="-8.60" width="4.2" height="4.2" fill="#3c3c3c" stroke="#f0f0f0" stroke-width="1.1"/></g>
<path d="M1056,349.5 l0,-5.5 l-5.5,5.5 z" fill="#8a8a8a"/>
<g transform="translate(1034,374)" ><path d="M0,-14.6 L12,-8 L0,-1.6 L-12,-8 Z M-13.2,-5.8 L-1.3,0.8 V15 L-13.2,8.4 Z M13.2,-5.8 L1.3,0.8 V15 L13.2,8.4 Z" fill="#53d86a"/></g>
<path d="M1056,395.5 l0,-5.5 l-5.5,5.5 z" fill="#8a8a8a"/>
<path d="M1031.8,409.6 L1023.2,415 L1022.2,424 L1027.6,427 L1028.6,432 L1036.5,437.4 L1045.8,430.5 C1046,423 1043,415 1037.3,411.4 Z M1025.6,417.6 C1032,419 1036,425 1036.4,432" fill="none" stroke="#9e99fb" stroke-width="2.1" stroke-linejoin="round"/>
<path d="M1056,444.5 l0,-5.5 l-5.5,5.5 z" fill="#8a8a8a"/>
<path d="M1023,481.6 V458 M1023,480.4 H1045" stroke="#9e99fb" stroke-width="2.6" fill="none"/><path d="M1023,454.4 L1026.6,460 H1019.4 Z M1048.8,480.4 L1043.4,484 V476.8 Z" fill="#9e99fb"/>
<g transform="translate(1040.4,463.2)" ><polygon points="0.00,-7.80 6.75,-3.90 6.75,3.90 0.00,7.80 -6.75,3.90 -6.75,-3.90" fill="none" stroke="#9e99fb" stroke-width="1.6"/><path d="M0,0 V7.8 M0,0 L-6.7,-3.9 M0,0 L6.7,-3.9" stroke="#9e99fb" stroke-width="1.4"/></g>
<path d="M1056,490.5 l0,-5.5 l-5.5,5.5 z" fill="#8a8a8a"/>
<path d="M1022,511.4 L1033.4,517.6 V532.6 L1022,525.6 Z M1035,505 L1046,510.8 V525.6 L1035,520 Z M1027.8,522 L1040.5,514.2" fill="none" stroke="#ee9be6" stroke-width="1.8" stroke-linejoin="miter"/>
<path d="M1056,541.5 l0,-5.5 l-5.5,5.5 z" fill="#8a8a8a"/>
<g transform="translate(1033.8,576.4)" ><circle r="14" fill="none" stroke="#c8d2f7" stroke-width="2"/><ellipse rx="5.6" ry="14" fill="none" stroke="#c8d2f7" stroke-width="1.5"/><path d="M-13,-5 H13 M-13,5 H13" stroke="#c8d2f7" stroke-width="1.5" fill="none"/></g>
<rect x="1036.9" y="579.2" width="12.2" height="12.4" rx="2.6" fill="#050505"/><text x="1043.0" y="588.6" font-size="8.6" font-weight="700" text-anchor="middle" fill="#fff" font-family="Liberation Sans, sans-serif">ST</text>
<path d="M1056,597.8 l0,-6 l-6,6 z" fill="#8a8a8a"/>
<path d="M1019.1,617.2 V610.6 a2.2,2.2 0 0 1 2.2,-2.2 H1025.2 L1028.2,614.4 H1031.2 L1028.2,608.4 H1033.6 L1036.6,614.4 H1039.6 L1036.6,608.4 H1042 L1045,614.4 H1046.2 V608.4 H1049 V617.2 Z" fill="#c8d2f7"/><path d="M1020.4,616 V630.6 a1.8,1.8 0 0 0 1.8,1.8 H1046 a1.8,1.8 0 0 0 1.8,-1.8 V616" fill="none" stroke="#c8d2f7" stroke-width="2.5"/>
<path d="M1021.6,656.4 H1035.9 V662.6" fill="none" stroke="#c8d2f7" stroke-width="2.4" stroke-linecap="round"/><rect x="1020.8" y="664" width="16" height="11.8" rx="2.2" fill="none" stroke="#c8d2f7" stroke-width="2.4"/><path d="M1041.4,667 L1048.6,662.8 V670 H1041.4 Z" fill="#c8d2f7"/>
<rect x="1036.9" y="669.2" width="12.2" height="12.4" rx="2.6" fill="#050505"/><text x="1043.0" y="678.6" font-size="8.6" font-weight="700" text-anchor="middle" fill="#fff" font-family="Liberation Sans, sans-serif">ST</text>
<path d="M1056,688.4 l0,-6 l-6,6 z" fill="#8a8a8a"/>
<path d="M1029.4,718.4 A7.4,7.4 0 1 1 1038.6,718.4 M1029.8,720.8 H1036.4 M1030.4,723 H1035.8 M1032.8,725.4 H1034.8" fill="none" stroke="#c8d2f7" stroke-width="1.9"/><path d="M1033.9,696.8 V700.4 M1023.7,700.9 L1026.2,703.4 M1044.5,700.9 L1042,703.4 M1019.8,711.5 H1023.2 M1044.6,711.5 H1048" stroke="#c8d2f7" stroke-width="2.2" stroke-linecap="round"/>
<rect x="1036.9" y="714.2" width="12.2" height="12.4" rx="2.6" fill="#050505"/><text x="1043.0" y="723.6" font-size="8.6" font-weight="700" text-anchor="middle" fill="#fff" font-family="Liberation Sans, sans-serif">ST</text>
<path d="M1056,733.5 l0,-6 l-6,6 z" fill="#8a8a8a"/>
<g transform="translate(1033.6,780)" ><path d="M7,-11.5 L0,-15.5 L-13.4,-7.7 V7.7 L0,15.5 L13.4,7.7 V-1" fill="none" stroke="#505050" stroke-width="1.6"/><path d="M-5.6,6 L-4.4,1.6 L6.6,-9.4 L9.8,-6.2 L-1.2,4.8 Z M8,-10.8 L9.6,-12.4 a1.6,1.6 0 0 1 2.2,0 L12.8,-11.4 a1.6,1.6 0 0 1 0,2.2 L11.2,-7.6 Z" fill="#585858"/></g>
<path d="M1056,803.5 l0,-5.5 l-5.5,5.5 z" fill="#606060"/>
<path d="M1322.9,104.9 L1328.6,109.4 L1322.9,113.9" stroke="#c0c0c0" stroke-width="1.4" fill="none"/>
<circle cx="1353.6" cy="107.4" r="6.3" fill="none" stroke="#9c9c9c" stroke-width="2"/><path d="M1358.2,112.2 L1363.6,117.6" stroke="#9c9c9c" stroke-width="2.2"/>
<path d="M1373,116.8 V107.4 L1380,101.4 L1387,107.4 V116.8 H1382.4 V111.4 H1377.6 V116.8 Z" fill="none" stroke="#9c9c9c" stroke-width="1.9"/>
<path d="M1395.8,104.2 h18.4 M1399.2,109.4 h11.6 M1402.3,114.60000000000001 h5.4" stroke="#9c9c9c" stroke-width="2.2"/>
<path d="M1429.4,101.2 H1423.4 a1.6,1.6 0 0 0 -1.6,1.6 V115.7 a1.6,1.6 0 0 0 1.6,1.6 H1436.1999999999998 a1.6,1.6 0 0 0 1.6,-1.6 V111.3" fill="none" stroke="#9c9c9c" stroke-width="1.8"/><path d="M1427.0,112.5 L1438.0,101.8 M1431.0,101.2 H1438.6 V108.6" fill="none" stroke="#9c9c9c" stroke-width="1.8"/>
<path d="M1069.5,124.5 V138.7 H1081" stroke="#6a6a6a" stroke-width="1" fill="none"/>
<g transform="translate(1090,138.1) scale(1)"><path d="M0,-6.4 C-9,-7.5 -9.5,-2.5 -1,0 C8,2.6 9,7.5 0,6.4" fill="none" stroke="#6ec8ec" stroke-width="1.5"/><circle cx="0.2" cy="-6.6" r="1.9" fill="#fff"/><circle cx="0.2" cy="6.6" r="1.9" fill="#fff"/></g>
<rect x="1169" y="131.2" width="13" height="12.6" rx="2.6" fill="#585858"/><path d="M1172.4,140.6 L1178.8,134.4" stroke="#222" stroke-width="2"/>
<circle cx="1193" cy="132.6" r="3.7" fill="#585858"/><circle cx="1193" cy="143.6" r="3.7" fill="#585858"/>
<path d="M1202.8,137.4 L1207.2,141.8 L1216.2,132" stroke="#4fd272" stroke-width="2.4" fill="none"/>
<path d="M1189.5,395.9 L1195.2,400.4 L1189.5,404.9" stroke="#c0c0c0" stroke-width="1.4" fill="none"/>
<path d="M1262.6,399.8 H1247.4 M1254.4,392 L1246.6,399.8 L1254.4,407.6" stroke="#9c9c9c" stroke-width="2.2" fill="none"/>
<path d="M1272.4,399.8 H1287.6 M1280.6,392 L1288.4,399.8 L1280.6,407.6" stroke="#454545" stroke-width="2.2" fill="none"/>
<path d="M1304.8,408.4 V392.6 M1297,399.6 L1304.8,391.8 L1312.6,399.6" stroke="#9c9c9c" stroke-width="2.2" fill="none"/>
<circle cx="1328" cy="398.4" r="5.8" fill="none" stroke="#9c9c9c" stroke-width="2"/><path d="M1332.4,403 L1338.4,408.6" stroke="#9c9c9c" stroke-width="2.2"/>
<path d="M1345.8,395.2 h18.4 M1349.2,400.4 h11.6 M1352.3,405.59999999999997 h5.4" stroke="#9c9c9c" stroke-width="2.2"/>
<rect x="1374.2" y="398.6" width="11.8" height="9.8" rx="1.4" fill="none" stroke="#9c9c9c" stroke-width="1.8"/><path d="M1376.2,398.4 V395.4 a4,4 0 0 1 8,0" fill="none" stroke="#9c9c9c" stroke-width="1.8"/><circle cx="1380.1" cy="403.6" r="1.5" fill="#9c9c9c"/>
<circle cx="1404.9" cy="399.8" r="9.6" fill="none" stroke="#9c9c9c" stroke-width="1.7"/><circle cx="1404.9" cy="399.8" r="3.4" fill="none" stroke="#9c9c9c" stroke-width="1.7"/>
<path d="M1429.6,392.0 H1423.6 a1.6,1.6 0 0 0 -1.6,1.6 V406.59999999999997 a1.6,1.6 0 0 0 1.6,1.6 H1436.6 a1.6,1.6 0 0 0 1.6,-1.6 V402.2" fill="none" stroke="#9c9c9c" stroke-width="1.8"/><path d="M1427.1999999999998,403.4 L1438.4,392.6 M1431.4,392.0 H1439 V399.40000000000003" fill="none" stroke="#9c9c9c" stroke-width="1.8"/>
<g transform="translate(1080,433.3) scale(1.27)"><path d="M0,-6.4 C-9,-7.5 -9.5,-2.5 -1,0 C8,2.6 9,7.5 0,6.4" fill="none" stroke="#6ec8ec" stroke-width="1.5"/><circle cx="0.2" cy="-6.6" r="1.9" fill="#fff"/><circle cx="0.2" cy="6.6" r="1.9" fill="#fff"/></g>
<path d="M1416.5,430.40000000000003 h10 l-5,5.2 z" fill="#c8c8c8"/>
<path d="M1399,521.2 h10 l-5,5.2 z" fill="#c8c8c8"/>
<path d="M1399,571.6 h10 l-5,5.2 z" fill="#c8c8c8"/>
<path d="M1325.5,663.6 h10 l-5,5.2 z" fill="#c8c8c8"/>
<path d="M1417,663.6 h10 l-5,5.2 z" fill="#4c4c4c"/>
<circle cx="1077.3" cy="522.2" r="9.5" fill="#282828"/><path d="M1077.3,517.0 l5.2,5.2 l-5.2,5.2 l-5.2,-5.2 z" fill="none" stroke="#b4b4b4" stroke-width="1.4"/>
<circle cx="1077.3" cy="547.4" r="9.5" fill="#282828"/><path d="M1077.3,542.1999999999999 l5.2,5.2 l-5.2,5.2 l-5.2,-5.2 z" fill="none" stroke="#b4b4b4" stroke-width="1.4"/>
<circle cx="1077.3" cy="572.8" r="9.5" fill="#282828"/><path d="M1077.3,567.5999999999999 l5.2,5.2 l-5.2,5.2 l-5.2,-5.2 z" fill="none" stroke="#b4b4b4" stroke-width="1.4"/>
<circle cx="1077.3" cy="598.8" r="9.5" fill="#282828"/><path d="M1077.3,593.5999999999999 l5.2,5.2 l-5.2,5.2 l-5.2,-5.2 z" fill="none" stroke="#4a4a4a" stroke-width="1.4"/>
<circle cx="1077.3" cy="626.4" r="9.5" fill="#282828"/><path d="M1077.3,621.1999999999999 l5.2,5.2 l-5.2,5.2 l-5.2,-5.2 z" fill="none" stroke="#b4b4b4" stroke-width="1.4"/>
<path d="M1201.2,548.4 L1204.4,551.6 L1210,545.2" stroke="#fff" stroke-width="2" fill="none"/>
<g transform="translate(72.4,864)" ><path d="M0,-9.4 L9.4,0 L0,9.4 L-9.4,0 Z" fill="none" stroke="#dcdcdc" stroke-width="2.5"/></g>
<path d="M146.6,856.6 V871.4" stroke="#c4c4c4" stroke-width="1.9"/><path d="M161.2,856.8 L152,864 L161.2,871.2 Z" fill="none" stroke="#c4c4c4" stroke-width="1.6" stroke-linejoin="miter"/>
<path d="M183.2,858.4 l5.6,5.6 l-5.6,5.6 l-5.6,-5.6 z" fill="#c4c4c4"/><path d="M199.8,856.8 L191.4,864 L199.8,871.2 Z" fill="none" stroke="#c4c4c4" stroke-width="1.6" stroke-linejoin="miter"/>
<path d="M226.2,856.8 L217.4,864 L226.2,871.2 Z" fill="none" stroke="#c4c4c4" stroke-width="1.6" stroke-linejoin="miter"/><path d="M230.4,856.6 V871.4" stroke="#c4c4c4" stroke-width="1.9"/>
<path d="M252.4,855 L266,864 L252.4,873.2 Z" fill="none" stroke="#c4c4c4" stroke-width="1.7"/>
<path d="M286.6,856.6 V871.4" stroke="#c4c4c4" stroke-width="1.9"/><path d="M291.8,856.8 L301,864 L291.8,871.2 Z" fill="none" stroke="#c4c4c4" stroke-width="1.6" stroke-linejoin="miter"/>
<path d="M318.4,856.8 L327.2,864 L318.4,871.2 Z" fill="none" stroke="#c4c4c4" stroke-width="1.6" stroke-linejoin="miter"/><path d="M335,858.4 l5.6,5.6 l-5.6,5.6 l-5.6,-5.6 z" fill="#c4c4c4"/>
<path d="M357,856.8 L366.4,864 L357,871.2 Z" fill="none" stroke="#c4c4c4" stroke-width="1.6" stroke-linejoin="miter"/><path d="M371.8,856.6 V871.4" stroke="#c4c4c4" stroke-width="1.9"/>
<path d="M404.6,863.4 V857.6 H420.6 M416.6,853.4 L421.2,857.6 L416.6,861.8 M420.8,865 V870.8 H403 M407,866.6 L402.4,870.8 L407,875" stroke="#dcdcdc" stroke-width="1.6" fill="none"/>
<path d="M429,880.5 l0,-5 l-5,5 z" fill="#a8a8c8"/>
<text x="446.6" y="863.4" font-size="11.5" text-anchor="middle" fill="#dcdcdc" font-family="Liberation Sans, sans-serif">A</text>
<path d="M435.4,867.6 h2 v5.4 h-2z M439.4,867.6 h2 v5.4 h-2z M443.4,867.6 h2 v5.4 h-2z M451.4,867.6 h7.6 v5.4 h-7.6z" fill="#dcdcdc"/>
<path d="M463,880.5 l0,-5 l-5,5 z" fill="#a8a8c8"/>
<path d="M472,860 H476 L481.6,855 V873 L476,868 H472 Z" fill="none" stroke="#c4c4c4" stroke-width="1.6" stroke-linejoin="round"/><path d="M485,859.6 a5.4,5.4 0 0 1 0,8.8 M487,854.6 a10.6,10.6 0 0 1 0,18.8" fill="none" stroke="#c4c4c4" stroke-width="1.7"/>
<circle cx="636.6" cy="863.8" r="11.2" fill="none" stroke="#e8705e" stroke-width="1.6"/><path d="M636.6,858.5999999999999 l5.2,5.2 l-5.2,5.2 l-5.2,-5.2 z" fill="#c4c4c4"/>
<path d="M653,880.5 l0,-5 l-5,5 z" fill="#8a8a8a"/>
<circle cx="671.5" cy="863.8" r="11.2" fill="none" stroke="#e8705e" stroke-width="1.6"/><text x="671.5" y="869.2" font-size="15" text-anchor="middle" fill="#d0d0d0" font-family="Liberation Sans, sans-serif">A</text>
<circle cx="706.5" cy="863.8" r="11.2" fill="none" stroke="#c4c4c4" stroke-width="1.5"/>
<path d="M704.93,859.18 L705.13,857.34 L707.87,857.34 L708.07,859.18 L709.72,860.13 L711.40,859.38 L712.78,861.76 L711.29,862.85 L711.29,864.75 L712.78,865.84 L711.40,868.22 L709.72,867.47 L708.07,868.42 L707.87,870.26 L705.13,870.26 L704.93,868.42 L703.28,867.47 L701.60,868.22 L700.22,865.84 L701.71,864.75 L701.71,862.85 L700.22,861.76 L701.60,859.38 L703.28,860.13 Z M708.90,863.8 a2.40,2.40 0 1,0 -4.80,0 a2.40,2.40 0 1,0 4.80,0 Z" fill="#c4c4c4" fill-rule="evenodd"/>
<path d="M766.5,858.5 l5.5,5.5 l-5.5,5.5 l-5.5,-5.5 z" fill="#c4c4c4"/><path d="M762.6,857.3 L766.5,853.5 L770.4,857.3 M762.6,870.7 L766.5,874.5 L770.4,870.7 M759.3,860.2 L755.5,864 L759.3,867.8 M773.7,860.2 L777.5,864 L773.7,867.8" stroke="#c4c4c4" stroke-width="1.6" fill="none"/>
<path d="M801.4,858.5 l5.5,5.5 l-5.5,5.5 l-5.5,-5.5 z" fill="#c4c4c4"/><path d="M801.6,853.4 A11,11 0 0 0 796.8,873.8 M797,868.4 V874 H791 M801.2,874.8 A11,11 0 0 0 806.2,854.4 M806,859.6 V854.2 H812" stroke="#c4c4c4" stroke-width="1.6" fill="none"/>
<path d="M826.2,862.4 V855.8 a1.6,1.6 0 0 1 1.6,-1.6 H844.8 a1.6,1.6 0 0 1 1.6,1.6 V872.2 a1.6,1.6 0 0 1 -1.6,1.6 H837.4" stroke="#c4c4c4" stroke-width="1.9" fill="none"/><path d="M831.5,863.0 l5.6,5.6 l-5.6,5.6 l-5.6,-5.6 z" fill="#c4c4c4"/>
<rect x="861.2" y="855.8" width="21.4" height="7.4" rx="3.7" fill="#c8c8c8"/><rect x="861.2" y="865.2" width="21.4" height="7.4" rx="3.7" fill="#c8c8c8"/><circle cx="865.2" cy="859.5" r="1.7" fill="#3c3c3c"/><circle cx="878.4" cy="868.9" r="1.7" fill="#3c3c3c"/>
<circle cx="907.2" cy="857.6" r="3.3" fill="#cfcfcf"/><circle cx="900.8" cy="870" r="3.5" fill="#cfcfcf"/><circle cx="913.2" cy="870" r="3.3" fill="#cfcfcf"/><path d="M895.6,853.2 L917.4,874.4" stroke="#595da6" stroke-width="4.4"/><path d="M896.6,854 L916.6,873.4" stroke="#cfcfcf" stroke-width="1.7"/>
<path d="M979.4,872 V855 M975.6,858.6 L979.4,853.6 L983.2,858.6 M979,871.6 H997.4 M993.8,867.8 L998.8,871.6 L993.8,875.4 M979.8,871.2 L994,857.4 M988.6,856.6 H994.8 V862.8" stroke="#d0d0d0" stroke-width="1.6" fill="none"/>
<defs><clipPath id="c1"><rect x="47" y="132" width="478.3" height="334"/></clipPath><clipPath id="c2"><rect x="529.7" y="132" width="478.3" height="334"/></clipPath><clipPath id="c3"><rect x="47" y="498.8" width="478.3" height="334.7"/></clipPath><clipPath id="c4"><rect x="529.7" y="498.8" width="478.3" height="334.7"/></clipPath></defs>
<g clip-path="url(#c1)">
<line x1="47" y1="237.7" x2="352.2" y2="222.7" stroke="#3a3a3a" stroke-width="1.1" />
<line x1="352.2" y1="222.7" x2="525" y2="213.6" stroke="#3a3a3a" stroke-width="1.1" />
<line x1="177" y1="132" x2="352.2" y2="222.7" stroke="#303030" stroke-width="1.1" />
<line x1="352.2" y1="222.7" x2="466" y2="281.5" stroke="#303030" stroke-width="1.1" />
<line x1="352.2" y1="132" x2="352.2" y2="222.7" stroke="#35d060" stroke-width="1.2" />
<line x1="352.2" y1="222.7" x2="482" y2="216.6" stroke="#e04848" stroke-width="1.4" />
<line x1="352.2" y1="222.7" x2="388" y2="244" stroke="#2f7fe8" stroke-width="1.8" />
<path d="M291.3,154.7 L441.9,138.6 L440,299.4 L291.3,297.5 Z" fill="none" stroke="#5aa8f0" stroke-width="1.4" stroke-linejoin="round"/>
<path d="M291.3,154.7 L441.9,138.6" fill="none" stroke="#b8d8f8" stroke-width="1.3" stroke-linejoin="round"/>
<path d="M291.3,154.7 L291.3,297.5" fill="none" stroke="#b8d8f8" stroke-width="1.3" stroke-linejoin="round"/>
<path d="M316.6,187.5 L397,181.4" fill="none" stroke="#3a90f0" stroke-width="1.5" stroke-linejoin="round"/>
<path d="M397,181.4 L414.3,237" fill="none" stroke="#9ccaf8" stroke-width="1.3" stroke-linejoin="round"/>
<path d="M414.3,237 L341.4,239.4" fill="none" stroke="#b8d8f8" stroke-width="1.4" stroke-linejoin="round"/>
<path d="M341.4,239.4 L316.6,187.5" fill="none" stroke="#e8f0ff" stroke-width="1.4" stroke-linejoin="round"/>
<line x1="377.2" y1="209.5" x2="377.2" y2="158.8" stroke="#35d060" stroke-width="1.8" />
<polygon points="377.2,143.8 381.00,158.80 373.40,158.80" fill="#35d060"/>
<line x1="385.5" y1="185" x2="387" y2="209" stroke="#e04848" stroke-width="2" />
<line x1="414.3" y1="237" x2="470.01297638635845" y2="234.88336046293347" stroke="#e04848" stroke-width="1.8" />
<polygon points="488,234.2 470.16,238.88 469.86,230.89" fill="#e04848"/>
<line x1="421.3" y1="242.3" x2="445" y2="240.4" stroke="#35d060" stroke-width="1.8" />
<path d="M415.6,172.9 L442.2,171 L442.2,195" fill="none" stroke="#2f7fe8" stroke-width="1.3" stroke-linejoin="round"/>
<path d="M429.9,172 L442.2,171 L442.2,183.5 Z" fill="rgba(90,150,240,0.35)" stroke="#2f7fe8" stroke-width="1.1" stroke-linejoin="round"/>
<circle cx="291.3" cy="154.7" r="2.8" fill="#2e2e2e"/>
<circle cx="441.9" cy="138.6" r="2.8" fill="#2e2e2e"/>
<circle cx="440" cy="299.4" r="2.8" fill="#2e2e2e"/>
<circle cx="291.3" cy="297.5" r="2.8" fill="#2e2e2e"/>
<circle cx="316.6" cy="187.5" r="2.8" fill="#2e2e2e"/>
<circle cx="397" cy="181.4" r="2.8" fill="#2e2e2e"/>
<rect x="338.59999999999997" y="236.6" width="5.6" height="5.6" fill="#f5a030"/>
<rect x="411.5" y="234.2" width="5.6" height="5.6" fill="#f5a030"/>
<circle cx="390.9" cy="245.3" r="3" fill="#2f7fe8"/>
<rect x="373" y="234" width="7" height="7" rx="1.5" fill="none" stroke="#8a8a8a" stroke-width="1.2"/>
<line x1="483" y1="151" x2="483" y2="174" stroke="#35d060" stroke-width="1.8" />
<line x1="483" y1="174" x2="503.8" y2="174" stroke="#e04848" stroke-width="1.8" />
<line x1="483" y1="174" x2="491.4" y2="173.4" stroke="#2f7fe8" stroke-width="1.8" />
<text x="483.6" y="147.9" font-size="13.5" text-anchor="middle" fill="#35d060" font-family="Liberation Sans, sans-serif">Y</text>
<text x="500.2" y="177.8" font-size="13.5" text-anchor="middle" fill="#2f7fe8" font-family="Liberation Sans, sans-serif">Z</text>
<text x="512.7" y="181" font-size="13.5" text-anchor="middle" fill="#e04848" font-family="Liberation Sans, sans-serif">X</text>
</g>
<path d="M321.6,140 H328.4 V143.4" fill="none" stroke="#b4b4cc" stroke-width="1.3"/><rect x="321.2" y="143.6" width="9.6" height="5.8" rx="1" fill="none" stroke="#b4b4cc" stroke-width="1.3"/><circle cx="333.6" cy="146" r="1.7" fill="#2a2a3c"/>
<rect x="126.4" y="238.2" width="10.6" height="11" fill="none" stroke="#7a5e44" stroke-width="1" stroke-dasharray="1.6 1.4"/><path d="M130.4,241.4 v4.6 l3.4,-2.3 z" fill="#9a9a9a"/>
<g clip-path="url(#c2)">
<line x1="535.5" y1="132" x2="535.5" y2="466" stroke="#484848" stroke-width="1.2" />
<line x1="1001.3" y1="132" x2="1001.3" y2="466" stroke="#4e4e4e" stroke-width="1.2" />
<line x1="530" y1="298.8" x2="768.4" y2="298.8" stroke="#444" stroke-width="1.2" />
<line x1="768.4" y1="298.8" x2="768.4" y2="466" stroke="#444" stroke-width="1.2" />
<line x1="768.4" y1="133" x2="768.4" y2="298.8" stroke="#2766cc" stroke-width="1.3" />
<path d="M763.8,139 L768.4,133.4 L773,139" fill="none" stroke="#2766cc" stroke-width="1.1"/>
<line x1="828" y1="298.8" x2="1004.5" y2="298.8" stroke="#e04848" stroke-width="1.1" />
<path d="M998.6,294.4 L1004.8,298.8 L998.6,303.2" fill="none" stroke="#e04848" stroke-width="1.1"/>
<line x1="799.6" y1="270.2" x2="799.6" y2="211.5" stroke="#2f7fe8" stroke-width="1.8" />
<polygon points="799.6,197.5 803.20,211.50 796.00,211.50" fill="#2f7fe8"/>
<path d="M836.7,237.8 L861.4,237.8 L861.4,261.2" fill="none" stroke="#35d060" stroke-width="1.3" stroke-linejoin="round"/>
<path d="M848.5,237.8 L861.4,237.8 L861.4,250.5 Z" fill="rgba(60,210,100,0.3)" stroke="#35d060" stroke-width="1" stroke-linejoin="round"/>
<circle cx="687.3" cy="298.8" r="2.8" fill="#2e2e2e"/>
<circle cx="721.7" cy="298.8" r="2.8" fill="#2e2e2e"/>
<circle cx="823" cy="298.8" r="2.8" fill="#2e2e2e"/>
<circle cx="873.6" cy="298.8" r="2.8" fill="#2e2e2e"/>
<rect x="752.2" y="296.0" width="5.6" height="5.6" fill="#f5a030"/>
<rect x="841.0" y="296.0" width="5.6" height="5.6" fill="#f5a030"/>
<line x1="690" y1="298.8" x2="828" y2="298.8" stroke="#a8ccf0" stroke-width="2.2" />
<line x1="828" y1="298.8" x2="886.0" y2="298.8" stroke="#e04848" stroke-width="1.8" />
<polygon points="900,298.8 886.00,302.40 886.00,295.20" fill="#e04848"/>
<circle cx="687.3" cy="298.8" r="2.8" fill="#2e2e2e"/>
<rect x="796.6" y="295.8" width="6" height="6" fill="#35d060"/>
<line x1="964.9" y1="151" x2="964.9" y2="173.4" stroke="#2f7fe8" stroke-width="1.8" />
<line x1="964.9" y1="174" x2="988" y2="174" stroke="#e04848" stroke-width="1.8" />
<text x="965.6" y="147.9" font-size="13.5" text-anchor="middle" fill="#2f7fe8" font-family="Liberation Sans, sans-serif">Z</text>
<text x="965.5" y="180.8" font-size="13.5" text-anchor="middle" fill="#35d060" font-family="Liberation Sans, sans-serif">Y</text>
<text x="997.2" y="180.8" font-size="13.5" text-anchor="middle" fill="#e04848" font-family="Liberation Sans, sans-serif">X</text>
</g>
<g clip-path="url(#c3)">
<line x1="53.3" y1="498" x2="53.3" y2="834" stroke="#484848" stroke-width="1.2" />
<line x1="523" y1="498" x2="523" y2="834" stroke="#505050" stroke-width="1.2" />
<line x1="47" y1="666" x2="286.1" y2="666" stroke="#444" stroke-width="1.2" />
<line x1="286.1" y1="666" x2="286.1" y2="834" stroke="#444" stroke-width="1.2" />
<line x1="286.1" y1="500" x2="286.1" y2="666" stroke="#35d060" stroke-width="1.2" />
<path d="M281.4,506 L286.1,500.2 L290.8,506" fill="none" stroke="#35d060" stroke-width="1.1"/>
<line x1="286.1" y1="666" x2="522.5" y2="666" stroke="#2766cc" stroke-width="1.3" />
<path d="M516.4,661.6 L522.6,666 L516.4,670.4" fill="none" stroke="#2766cc" stroke-width="1.1"/>
<line x1="286.1" y1="574.2" x2="286.1" y2="760.5" stroke="#4a98f0" stroke-width="1.8" />
<line x1="286.1" y1="657" x2="286.1" y2="600.5" stroke="#35d060" stroke-width="2" />
<polygon points="286.1,586.5 289.70,600.50 282.50,600.50" fill="#35d060"/>
<path d="M323.4,624.8 L347.6,624.8 L347.6,649.6" fill="none" stroke="#e04848" stroke-width="1.3" stroke-linejoin="round"/>
<path d="M335,624.8 L347.6,624.8 L347.6,637.5 Z" fill="rgba(230,70,70,0.45)" stroke="#e04848" stroke-width="1" stroke-linejoin="round"/>
<line x1="314.2" y1="686.6" x2="372.5" y2="686.6" stroke="#2f7fe8" stroke-width="1.6" />
<polygon points="386.5,686.6 372.50,690.20 372.50,683.00" fill="#2f7fe8"/>
<circle cx="286.1" cy="574.2" r="2.8" fill="#2e2e2e"/>
<circle cx="286.1" cy="619.2" r="2.8" fill="#2e2e2e"/>
<circle cx="286.1" cy="760.5" r="2.8" fill="#2e2e2e"/>
<rect x="283.1" y="683.6" width="6" height="6" fill="#e04848"/>
<line x1="482.2" y1="517.8" x2="482.2" y2="540.2" stroke="#35d060" stroke-width="1.8" />
<line x1="482.2" y1="540.8" x2="505.3" y2="540.8" stroke="#2f7fe8" stroke-width="1.8" />
<text x="482.9" y="514.7" font-size="13.5" text-anchor="middle" fill="#35d060" font-family="Liberation Sans, sans-serif">Y</text>
<text x="482.8" y="547.6" font-size="13.5" text-anchor="middle" fill="#e04848" font-family="Liberation Sans, sans-serif">X</text>
<text x="514.5" y="547.6" font-size="13.5" text-anchor="middle" fill="#2f7fe8" font-family="Liberation Sans, sans-serif">Z</text>
</g>
<g clip-path="url(#c4)">
<line x1="533.5" y1="498" x2="533.5" y2="834" stroke="#4c4c4c" stroke-width="1.2" />
<line x1="530" y1="663.7" x2="748.4" y2="663.7" stroke="#444" stroke-width="1.2" />
<line x1="748.4" y1="663.7" x2="748.4" y2="834" stroke="#444" stroke-width="1.2" />
<line x1="748.4" y1="500" x2="748.4" y2="663.7" stroke="#3cc060" stroke-width="1" />
<path d="M743.8,506 L748.4,500.2 L753,506" fill="none" stroke="#35d060" stroke-width="1.1"/>
<line x1="748.4" y1="663.7" x2="1004.5" y2="663.7" stroke="#e04848" stroke-width="1.1" />
<path d="M998.6,659.3 L1004.8,663.7 L998.6,668.1" fill="none" stroke="#e04848" stroke-width="1.1"/>
<path d="M610.2,507.8 L926.8,507.8 L926.8,824 L610.2,824 Z" fill="none" stroke="#5aa8f0" stroke-width="1.6" stroke-linejoin="round"/>
<path d="M610.2,824 L610.2,507.8 L926.8,507.8" fill="none" stroke="#b4d8fa" stroke-width="1.6" stroke-linejoin="round"/>
<path d="M669.2,584.2 L840,584.2" fill="none" stroke="#3a90f0" stroke-width="1.7" stroke-linejoin="round"/>
<path d="M840,584.2 L876.5,698.7" fill="none" stroke="#7ab8f8" stroke-width="1.4" stroke-linejoin="round"/>
<path d="M876.5,698.7 L725.5,698.7" fill="none" stroke="#b8d8f8" stroke-width="1.5" stroke-linejoin="round"/>
<path d="M725.5,698.7 L669.2,584.2" fill="none" stroke="#e0ecfa" stroke-width="1.3" stroke-linejoin="round"/>
<line x1="800.6" y1="669.5" x2="800.6" y2="610.4" stroke="#35d060" stroke-width="2" />
<polygon points="800.6,596.4 804.40,610.40 796.80,610.40" fill="#35d060"/>
<line x1="830" y1="698.7" x2="888.0" y2="698.7" stroke="#e04848" stroke-width="1.8" />
<polygon points="902,698.7 888.00,702.30 888.00,695.10" fill="#e04848"/>
<path d="M837.6,636.9 L861.8,636.9 L861.8,660" fill="none" stroke="#2f7fe8" stroke-width="1.3" stroke-linejoin="round"/>
<path d="M849.6,636.9 L861.8,636.9 L861.8,649 Z" fill="rgba(90,150,240,0.35)" stroke="#2f7fe8" stroke-width="1" stroke-linejoin="round"/>
<circle cx="610.2" cy="507.8" r="2.8" fill="#2e2e2e"/>
<circle cx="926.8" cy="507.8" r="2.8" fill="#2e2e2e"/>
<circle cx="926.8" cy="824" r="2.8" fill="#2e2e2e"/>
<circle cx="610.2" cy="824" r="2.8" fill="#2e2e2e"/>
<circle cx="669.2" cy="584.2" r="2.8" fill="#2e2e2e"/>
<circle cx="840" cy="584.2" r="2.8" fill="#2e2e2e"/>
<rect x="722.7" y="695.9000000000001" width="5.6" height="5.6" fill="#f5a030"/>
<rect x="873.7" y="695.9000000000001" width="5.6" height="5.6" fill="#f5a030"/>
<circle cx="800.6" cy="698.7" r="3.2" fill="#2f7fe8"/>
<line x1="964.9" y1="517.8" x2="964.9" y2="540.2" stroke="#35d060" stroke-width="1.8" />
<line x1="964.9" y1="540.8" x2="988" y2="540.8" stroke="#e04848" stroke-width="1.8" />
<text x="965.6" y="514.7" font-size="13.5" text-anchor="middle" fill="#35d060" font-family="Liberation Sans, sans-serif">Y</text>
<text x="965.5" y="547.6" font-size="13.5" text-anchor="middle" fill="#2f7fe8" font-family="Liberation Sans, sans-serif">Z</text>
<text x="997.2" y="547.6" font-size="13.5" text-anchor="middle" fill="#e04848" font-family="Liberation Sans, sans-serif">X</text>
</g>
</svg>
</body></html>
